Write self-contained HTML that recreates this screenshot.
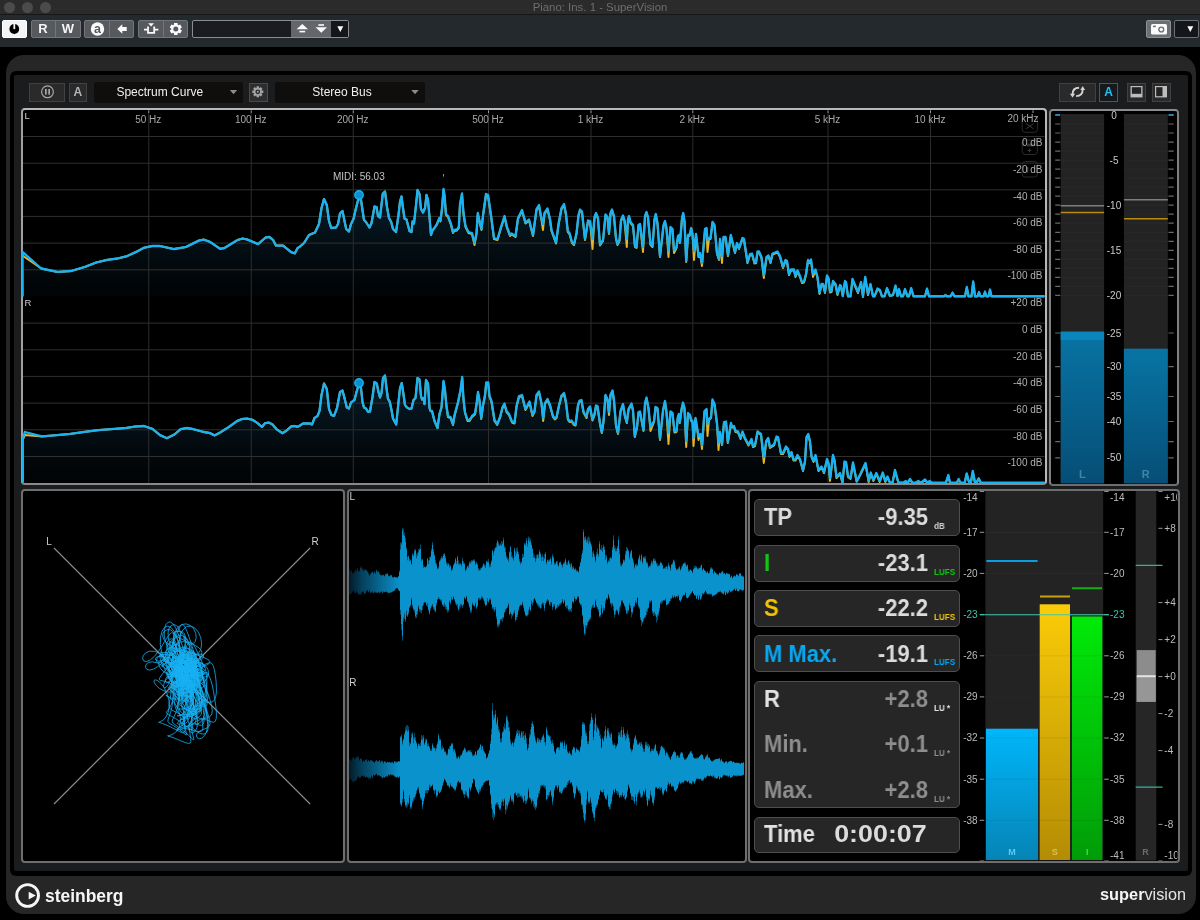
<!DOCTYPE html><html><head><meta charset="utf-8"><title>Piano: Ins. 1 - SuperVision</title><style>
*{box-sizing:border-box;margin:0;padding:0}
html,body{width:1200px;height:920px;overflow:hidden;background:#000}
body{position:relative;font-family:"Liberation Sans",Arial,sans-serif;color:#ddd}
.abs{position:absolute}
#titlebar{left:0;top:0;width:1200px;height:14px;background:#2b2b2b}
#title{left:0;top:0;width:1200px;height:14px;line-height:14px;text-align:center;font-size:11.4px;color:#6e6e6e}
.tl{width:11px;height:11px;border-radius:50%;background:#4b4b4b;top:1.5px}
#tbline{left:0;top:14px;width:1200px;height:1px;background:#15181a}
#toolbar{left:0;top:15px;width:1200px;height:32px;background:#24292e}
.tb{top:20px;height:18px;background:#565a5e;border:1px solid #72767a;border-radius:2px}
.tbt{top:20px;height:18px;color:#f4f4f4;font-weight:bold;font-size:13px;line-height:18px;text-align:center}
.tdv{top:21px;width:1px;height:16px;background:#72767a}
#frame{left:5.5px;top:55px;width:1190px;height:859px;background:#262626;border-radius:18px}
#inset{left:10px;top:70.5px;width:1181.5px;height:804.5px;background:#000;border-radius:6px}
#panel{left:13.5px;top:75px;width:1173.5px;height:796px;background:#1a1c1e;border-radius:2px}
.box{background:#000;border:2px solid #6e6e6e;border-radius:4px}
.pbtn{top:82.5px;height:18.5px;background:#2a2a2a;border:1px solid #414141}
.dd{top:81.5px;height:20.5px;background:#100d0d;border-radius:2px;color:#f0f0f0;font-size:12px;line-height:20.5px;text-align:center}
svg{position:absolute;left:0;top:0;overflow:visible;will-change:transform}
.abs{will-change:transform}
text{font-family:"Liberation Sans",Arial,sans-serif}
.row{left:753.7px;width:206px;background:#262626;border:1px solid #4e4e4e;border-radius:5px}
.lab{left:764px;font-size:23px;font-weight:bold;line-height:23px;color:#dcdcdc;white-space:nowrap;transform:scaleX(.955);transform-origin:0 0}
.val{left:840px;width:88px;text-align:right;font-size:23px;font-weight:bold;line-height:23px;color:#dcdcdc;white-space:nowrap;transform:scaleX(.955);transform-origin:100% 0}
.unit{left:934px;font-size:8.6px;font-weight:bold;line-height:8.6px;color:#d0d0d0;white-space:nowrap;transform:scaleX(.94);transform-origin:0 0}
.g{color:#8e8e8e}
</style></head><body>
<div id="titlebar" class="abs"></div>
<div class="abs tl" style="left:3.5px"></div>
<div class="abs tl" style="left:21.5px"></div>
<div class="abs tl" style="left:39.5px"></div>
<div id="title" class="abs">Piano: Ins. 1 - SuperVision</div>
<div id="tbline" class="abs"></div><div id="toolbar" class="abs"></div>
<div class="abs tb" style="left:2px;width:24.5px;background:#f4f4f4;border-color:#fff"></div>
<div class="abs tb" style="left:30.5px;width:49.5px"></div><div class="abs tdv" style="left:54.5px"></div>
<div class="abs tbt" style="left:31px;width:24px">R</div><div class="abs tbt" style="left:56px;width:24px">W</div>
<div class="abs tb" style="left:84px;width:50px"></div><div class="abs tdv" style="left:108.5px"></div>
<div class="abs tb" style="left:138px;width:50px"></div><div class="abs tdv" style="left:162.5px"></div>
<div class="abs tb" style="left:192px;width:157px;background:#1b1c1f;border-color:#8a8e91"></div>
<div class="abs" style="left:291px;top:21px;width:40px;height:16px;background:#63676b"></div>
<div class="abs" style="left:331px;top:21px;width:17px;height:16px;background:#14161a"></div>
<div class="abs tb" style="left:1146px;width:25px;background:#6c7073;border-color:#8e9194"></div>
<div class="abs tb" style="left:1174px;width:25px;background:#14161a;border-color:#6c7176"></div>
<svg width="1200" height="60" viewBox="0 0 1200 60"><circle cx="14.3" cy="29" r="4.9" fill="#000"/><rect x="13.4" y="23.5" width="1.8" height="5.6" fill="#f4f4f4"/><circle cx="97.5" cy="29" r="6.7" fill="#fafafa"/><text x="97.5" y="33.3" font-size="12.5" font-weight="bold" fill="#565a5e" text-anchor="middle">a</text><path d="M117.3 29 L122.3 24.3 L122.3 27 L126.7 27 L126.7 31 L122.3 31 L122.3 33.7 Z" fill="#fafafa"/><path d="M148.2 23.2 h5.8 l-2.9 3.2 z" fill="#fafafa"/><path d="M144 29.6 h3.2 M155 29.6 h3.4" stroke="#fafafa" stroke-width="1.8"/><path d="M148 26.6 v6.2 h6.2 v-6.2" fill="none" stroke="#fafafa" stroke-width="1.8"/><path d="M174 23 L177.6 23 L177.7 24.8 L178.5 25.3 L180.2 24.5 L181.9 27.5 L180.4 28.5 L180.4 29.5 L181.9 30.5 L180.2 33.5 L178.5 32.7 L177.7 33.2 L177.6 35 L174 35 L173.9 33.2 L173.1 32.7 L171.4 33.5 L169.7 30.5 L171.2 29.5 L171.2 28.5 L169.7 27.5 L171.4 24.5 L173.1 25.3 L173.9 24.8 Z" fill="#fafafa"/><circle cx="175.8" cy="29" r="2.5" fill="#565a5e"/><path d="M296.5 29.3 L302.3 24 L308 29.3 Z" fill="#fafafa"/><rect x="299.5" y="30.8" width="5.6" height="1.6" fill="#fafafa"/><path d="M315.5 27.3 L327 27.3 L321.3 32.8 Z" fill="#fafafa"/><rect x="318.4" y="24.2" width="5.6" height="1.6" fill="#fafafa"/><path d="M337.3 26.2 L343.3 26.2 L340.3 32 Z" fill="#fafafa"/><rect x="1151" y="24" width="16" height="10.6" rx="1.6" fill="#fafafa"/><circle cx="1161.3" cy="29.5" r="3.1" fill="#6c7073"/><circle cx="1161.3" cy="29.5" r="1.7" fill="#fafafa"/><rect x="1153" y="25.6" width="2.8" height="1.6" fill="#6c7073"/><path d="M1187.3 26.2 L1193.3 26.2 L1190.3 32 Z" fill="#fafafa"/></svg>
<div id="frame" class="abs"></div><div id="inset" class="abs"></div><div id="panel" class="abs"></div>
<div class="abs pbtn" style="left:29px;width:36px"></div>
<div class="abs pbtn" style="left:69.3px;width:17.5px;color:#b4b4b4;font-weight:bold;font-size:12px;line-height:17px;text-align:center">A</div>
<div class="abs dd" style="left:93.5px;width:148.5px;padding-right:17px">Spectrum Curve</div>
<div class="abs pbtn" style="left:248.5px;width:18.5px;background:#2e2e2e;border-color:#4a4a4a"></div>
<div class="abs dd" style="left:275px;width:150px;padding-right:16px">Stereo Bus</div>
<div class="abs pbtn" style="left:1059px;width:37px"></div>
<div class="abs pbtn" style="left:1099px;width:19px;background:#141a1e;border-color:#0a6f96;color:#1ac6f8;font-weight:bold;font-size:12px;line-height:17px;text-align:center">A</div>
<div class="abs pbtn" style="left:1127px;width:19px"></div>
<div class="abs pbtn" style="left:1151.5px;width:19px"></div>
<svg width="1200" height="120" viewBox="0 0 1200 120"><circle cx="47.5" cy="91.8" r="5.9" fill="none" stroke="#a8a8a8" stroke-width="1.2"/><rect x="45" y="89" width="1.7" height="5.6" fill="#a8a8a8"/><rect x="48.3" y="89" width="1.7" height="5.6" fill="#a8a8a8"/><path d="M229.8 90 L237.2 90 L233.5 94.2 Z" fill="#8c8c8c"/><path d="M411.3 90 L418.7 90 L415 94.2 Z" fill="#8c8c8c"/><path d="M256.6 86.3 L259 86.3 L259.1 87.9 L259.7 88.1 L260.8 87.1 L262.5 88.8 L261.5 89.9 L261.7 90.5 L263.3 90.6 L263.3 93 L261.7 93.1 L261.5 93.7 L262.5 94.8 L260.8 96.5 L259.7 95.5 L259.1 95.7 L259 97.3 L256.6 97.3 L256.5 95.7 L255.9 95.5 L254.8 96.5 L253.1 94.8 L254.1 93.7 L253.9 93.1 L252.3 93 L252.3 90.6 L253.9 90.5 L254.1 89.9 L253.1 88.8 L254.8 87.1 L255.9 88.1 L256.5 87.9 Z" fill="#a4a4a4"/><circle cx="257.8" cy="91.8" r="2.4" fill="#2e2e2e"/><circle cx="257.8" cy="91.8" r="1" fill="#a4a4a4"/><path d="M1079.1 87.7 Q1072.6 87.7 1072.6 94.2" fill="none" stroke="#d2d2d2" stroke-width="1.9"/><path d="M1076.1 96.1 Q1082.7 96.1 1082.7 89.6" fill="none" stroke="#d2d2d2" stroke-width="1.9"/><path d="M1069.9 93.8 L1075.2 93.8 L1072.5 97.4 Z" fill="#d2d2d2"/><path d="M1080.3 90 L1085.1 90 L1082.7 86 Z" fill="#d2d2d2"/><rect x="1130.5" y="86" width="12" height="11.4" fill="#bdbdbd"/><rect x="1131.8" y="87.2" width="9.4" height="6.6" fill="#242424"/><rect x="1155" y="86" width="12" height="11.4" fill="#bdbdbd"/><rect x="1156.2" y="87.2" width="6.3" height="9" fill="#242424"/></svg>
<div class="abs box" id="spec" style="left:21px;top:108.3px;width:1025.8px;height:377px;border-color:#b8b8b8 #b8b8b8 #8a8a8a #a0a0a0"></div>
<div class="abs box" id="meter" style="left:1049.3px;top:108.6px;width:130px;height:376.6px;border-color:#8c8c8c #808080 #6e6e6e #808080"></div>
<div class="abs box" id="vec" style="left:21px;top:489px;width:323.5px;height:374px"></div>
<div class="abs box" id="wave" style="left:346.5px;top:489px;width:399.5px;height:374px"></div>
<div class="abs box" id="loud" style="left:747.7px;top:489px;width:431.5px;height:374px"></div>
<svg width="1200" height="920" viewBox="0 0 1200 920"><defs><linearGradient id="gl" gradientUnits="userSpaceOnUse" x1="0" y1="195" x2="0" y2="297"><stop offset="0" stop-color="#0c3046" stop-opacity="0.6"/><stop offset="1" stop-color="#0a1e2c" stop-opacity="0.1"/></linearGradient><linearGradient id="gr" gradientUnits="userSpaceOnUse" x1="0" y1="380" x2="0" y2="483"><stop offset="0" stop-color="#0c3046" stop-opacity="0.6"/><stop offset="1" stop-color="#0a1e2c" stop-opacity="0.1"/></linearGradient></defs><path d="M22.5 251.9 L41.2 268.5 L57.5 271.9 L71.2 271 L85 266.9 L96.2 262.5 L107.5 259.8 L117.5 258.5 L126.9 256.2 L136.2 251.9 L143.8 247.8 L152.5 245.9 L160 246 L173.8 249.1 L186.2 246.9 L198.8 240.6 L203.8 239.6 L210 241.9 L220 248.8 L224.4 248.1 L237.5 240 L242.5 238.5 L247.5 239.6 L258.1 244.1 L265.6 237.5 L269.4 236.9 L273.1 240 L276 245.6 L283.1 245.6 L291.2 252.2 L294.8 253.4 L297.5 248.1 L300 246.5 L304 243 L309 235 L315 232.5 L319 224 L321.5 208 L324 199 L326.8 205 L329 221 L331.2 228 L336 227.5 L338 224 L340 213.5 L342.5 211 L344.5 221 L346.2 229 L349 231.5 L351 224 L353.5 219 L356 208 L358.5 198.5 L361 200 L364 220 L366 222 L369.5 227.5 L371.5 223 L374.5 206.5 L376.5 207 L378 216 L380 217.5 L382.8 193.5 L385 191.5 L387 207 L389 218 L391.2 222 L393 229 L396 232 L398.5 215 L400 201.5 L401.5 196.5 L403 208 L404.5 218.5 L406.5 219.5 L409.5 231 L411.5 232 L412.5 221.5 L414 223.5 L416 205 L417.5 190 L419.5 194 L421 209 L423 212.5 L425 208 L426.5 195 L428 200 L429.5 217 L431 235 L432.5 230.5 L436.5 225 L439.5 218 L440.5 220.5 L442 208 L443.5 189 L444.5 195 L446 214 L448 216 L451 224 L453 232 L454.5 230 L457 229.5 L458.8 227 L460 204 L462 193.5 L463.5 213 L465.5 226 L468.5 232 L472 233 L474.5 243 L476.5 233 L477.8 213 L480 223 L481.5 229 L483 215 L486 194 L488 195 L491 215 L494 238 L497.5 239 L501 227 L504.5 216 L507 227 L510 235 L511.5 233.5 L515.5 236 L518 218 L522 210 L525.5 222.5 L529 219.5 L533 235 L536.5 209 L539 205 L541.5 219 L543 224 L544.5 213 L547.5 208.5 L550 219 L551.5 230 L556 242.5 L558.5 224 L561.5 208 L564 204 L566 214 L567.8 231 L569.5 233 L572 242 L574 244 L576.5 233 L578.5 215 L580 209.5 L582 211.5 L585 239 L588 220.5 L590 221 L592.5 239 L594.5 217 L596 213 L598 218 L600 244.5 L603 240 L605.5 214.5 L607.5 217 L609 233 L610.5 213 L612 209.5 L614 216 L616 238 L617.5 244 L619.5 240 L621 220 L623 215.5 L624.5 220 L626.8 239 L628 219 L629 216 L630.5 222 L633 225 L635 246 L636.5 247 L638.5 225 L640 224 L643 247 L645 216 L646.5 212 L648 217 L650.5 244 L652.5 246 L654.5 219 L655.8 214 L657.5 223 L660 256 L663.5 225 L665 221 L666.5 228 L668.5 251 L670.5 227 L672.5 229 L674 250 L676.5 247 L678 236 L679 235 L680 242 L682 218 L683.2 213 L684.5 221 L686.2 261 L688 235 L689.5 235 L691.2 228 L692.5 234 L694 251 L696 234 L698.5 256 L700 253 L702 263 L705 229 L706.5 228 L707.5 240 L709 238 L710.5 238 L712.5 222 L714.5 225 L717 253 L719 259 L720 239 L722 256 L723.5 237 L725.5 237 L728 255 L730.8 235 L735 252 L737 243 L739 248 L742.5 238 L744 239 L747.5 262 L750 254 L752 253.5 L754.5 262.5 L756 262 L757.5 251.5 L759 251.5 L761.5 257 L763.8 275 L766.5 257 L768.5 255.5 L770.5 262 L772.5 253.5 L775 252.5 L777.5 251.5 L780 256 L783 267 L785.5 260 L787 261 L789 274 L791 269.5 L794 269.5 L795.5 276 L797.5 270.5 L800 276 L802 282 L804 281.5 L806 274 L808 260 L809.5 262 L811 259.5 L813 274 L815.5 269.5 L817.5 277 L819.5 293 L821.5 284 L823 284 L825 292 L827 275.5 L828.5 278 L830 291.5 L831.5 291 L833 281 L835.5 284 L837.5 294 L840 285 L841 286 L842.8 296 L845 281 L846 282 L848 296.3 L850.5 296.3 L852.5 279 L855 285 L858 292 L861 282 L863 296 L865.2 277 L868 294 L870.5 284 L873 296.3 L874.5 296.3 L877.5 288.5 L880 290 L882 296.3 L884.5 296.3 L887 288 L890 296 L893 295 L895.5 285.5 L897.5 296 L899 289 L901 296.3 L903 296.3 L905 289 L907.5 296.3 L909 296.3 L911.2 288 L913.5 296.3 L925 296.3 L927 288.5 L929 296.3 L944 296.3 L945.5 295 L946.5 296.3 L950.5 296.3 L952.5 292.5 L954.5 296.3 L965 296.3 L966.8 287 L968.5 296.3 L971.5 296.3 L973.2 281.5 L975 296.3 L977.5 296.3 L979 292 L980.5 296.3 L983.5 296.3 L985 291.5 L986.5 296.3 L988.5 296.3 L990 289.5 L991.5 296.3 L1044.5 296.3 L1044.5 296.4 L22.5 296.4 Z" fill="url(#gl)"/><path d="M22.8 439.5 L24.8 432 L41.9 436.4 L57.5 435.1 L70 433.9 L85 431.8 L98.8 430.1 L113.8 428.9 L126.2 427.9 L135 426.6 L143.8 426 L152.5 428.9 L160 435.1 L166.9 438.2 L174.4 434.5 L180.6 429.2 L186.9 428 L193.1 429.1 L203.8 432 L209.4 432.9 L214.6 435.4 L220 432.6 L228.8 427 L237.5 420.8 L242.5 418.9 L247.5 418.6 L252.5 419.8 L256.9 422.6 L261.9 427 L265 423.2 L268.8 422.6 L272.5 424.5 L276.9 429.5 L282.5 433.2 L286.2 430.8 L291.2 426.4 L294.4 426 L297.5 426.8 L300 425.5 L303 423.5 L310 423.5 L312 424.5 L314.5 418 L317.5 416 L319.5 411 L321.5 395 L324 383.5 L326.8 389 L329 409 L331.5 415 L334 416 L337 408 L340 392 L342.5 390.5 L344.5 398 L346.8 407.5 L349 408.5 L351 402.5 L354.5 400 L356.5 392 L358.5 385.5 L361 388 L362.5 402 L364 407.5 L366 408.5 L368 411.8 L370 411.5 L372.5 397 L374.5 382 L376.8 383.5 L378.5 392 L380 397.5 L381.5 393 L383 378 L385 375.5 L386.5 388 L388 399 L389.7 401.5 L391.5 410 L393 418.5 L396.2 424.5 L398.5 402 L400 388 L401.7 383 L403 391 L405 405 L407 407.5 L409.5 409 L411.5 408.5 L413.5 400 L415.5 398 L417.5 378 L419.5 379.5 L421 396 L422 399.5 L423.5 398 L424.5 404 L426 380 L428 383.5 L429.5 408 L430.5 411 L432 411 L434.5 421 L437.5 428 L439.5 414 L441.5 407 L443.5 381 L445 390 L446.5 406 L448 416 L450.5 417 L453 424 L454.5 415 L458 402 L460.5 390 L462.2 377 L463.5 399 L465 412 L467.5 420 L469.5 420 L472 416 L475 413.5 L476.5 404 L478 392 L479.5 400 L481.2 418 L483 405 L485 395 L486.2 382.5 L488.2 382.5 L489.5 396 L491.5 401 L494.5 420 L497.2 424 L500 417 L502.5 407 L504.5 403.5 L506.5 411 L509 414 L512 421.5 L514.5 422.5 L516.5 406 L519 396 L522 395 L525.5 409 L529.5 401.5 L532.5 415 L534.5 411 L536.5 395 L539 391.5 L541.5 403 L543.2 418 L545 403 L547.5 399 L550 405 L553 416 L554.8 418.5 L556.5 417 L559 405 L561.5 395.5 L564 393 L566 402 L568 419 L569.5 421 L571.5 420.5 L573.5 423.5 L575.5 424.5 L578 405 L579.5 400.5 L581.5 400 L583.5 411.5 L586.5 417 L588 409 L590 406.5 L592.5 419.5 L594.5 414 L596 405.5 L597.5 406 L600 423 L601.8 432 L603.5 421 L605.5 395 L607.5 399 L609 412 L610.5 394.5 L612.5 390.5 L614 400 L616 425 L618 433 L620.5 411 L623 404 L625 416 L626.8 422 L628.5 409 L630 406 L631.5 403.5 L633 410 L634.8 436 L637 427 L638.5 412 L640 411.5 L643.5 430 L645 403 L646.5 397.5 L648.5 408 L650.5 427 L654 421 L655.5 407 L657.5 408 L660 439 L663 410 L665 401 L666.5 412 L668.5 433 L670.5 411.5 L672.5 413 L674.5 431.5 L676.5 431 L677.8 417 L678.8 414 L679.8 422 L681.5 409 L683 402.5 L684.5 408 L686.2 441 L688 413 L690 415 L691.2 420 L692.5 421 L693.5 438 L695.5 418 L697 427 L698.5 436 L700.5 434 L702 445 L704.5 411 L706.5 409 L707.5 424 L709 419 L711 417 L712.5 399.5 L714.5 404 L717 423 L718.5 443 L720 432 L722 444 L724 422 L726 421.5 L727.8 442 L731 423 L732 426.5 L734 426 L735.5 431 L738 431.5 L740.5 438 L742.5 431.5 L744.5 437 L748.5 444.5 L751.5 439 L753 446 L755 445 L757.5 431.5 L761 434 L763.8 457 L766.2 441 L768.2 438 L770 447 L774 444.5 L776.5 436.5 L778 437 L781 453 L783 453 L786 446.5 L788 449 L789.5 456 L791.5 452 L793.5 459.5 L795.5 459.5 L797.5 455 L800 459 L803 470 L805 461 L806.5 437 L808.2 434 L810 441 L811.5 456 L813.5 461 L815.5 455 L818.5 470 L821.5 466.5 L824 472 L827 459 L828.5 463 L830 478 L833 455 L834.5 460 L836.5 477 L840 473 L842.5 482.5 L844.5 461.5 L846 462 L848 476 L850.5 478 L853 462.5 L856.7 481.5 L860.8 473 L865.5 463 L868.7 481 L870.8 472.5 L873.3 480 L876.3 473 L879.7 481 L882.8 472.5 L885.3 481 L887.5 476.5 L890 482.8 L892.5 482.8 L895 470 L898.3 482.5 L903.3 482.8 L905.8 481 L907.5 482.8 L910 479 L912.5 482.8 L915.8 482.8 L918.3 481 L920.8 482.8 L925 479.5 L927.5 482.8 L929.7 481 L931.7 482.8 L945.8 482.8 L948.3 475 L950 482.8 L956.7 482.8 L958.7 479 L960.3 482.8 L964.7 482.8 L966.7 473.3 L969.2 482.8 L970.8 482.8 L972.8 471 L975 482.8 L976.3 482.8 L978.7 478.3 L980.8 482.8 L1044.5 482.8 L1044.5 483 L22.7 483 Z" fill="url(#gr)"/><path d="M23 136.5 H1044.5" stroke="#2f2f2f" stroke-width="1"/><path d="M23 163.2 H1044.5" stroke="#2f2f2f" stroke-width="1"/><path d="M23 189.8 H1044.5" stroke="#2f2f2f" stroke-width="1"/><path d="M23 216.4 H1044.5" stroke="#2f2f2f" stroke-width="1"/><path d="M23 243.1 H1044.5" stroke="#2f2f2f" stroke-width="1"/><path d="M23 269.8 H1044.5" stroke="#2f2f2f" stroke-width="1"/><path d="M23 323.1 H1044.5" stroke="#2f2f2f" stroke-width="1"/><path d="M23 349.8 H1044.5" stroke="#2f2f2f" stroke-width="1"/><path d="M23 376.4 H1044.5" stroke="#2f2f2f" stroke-width="1"/><path d="M23 403.1 H1044.5" stroke="#2f2f2f" stroke-width="1"/><path d="M23 429.8 H1044.5" stroke="#2f2f2f" stroke-width="1"/><path d="M23 456.5 H1044.5" stroke="#2f2f2f" stroke-width="1"/><path d="M148.75 113 V483" stroke="#2c2c2c" stroke-width="1"/><path d="M148.75 110.3 V113" stroke="#9a9a9a" stroke-width="1"/><path d="M251.25 113 V483" stroke="#2c2c2c" stroke-width="1"/><path d="M251.25 110.3 V113" stroke="#9a9a9a" stroke-width="1"/><path d="M353.25 113 V483" stroke="#2c2c2c" stroke-width="1"/><path d="M353.25 110.3 V113" stroke="#9a9a9a" stroke-width="1"/><path d="M488.5 113 V483" stroke="#2c2c2c" stroke-width="1"/><path d="M488.5 110.3 V113" stroke="#9a9a9a" stroke-width="1"/><path d="M591 113 V483" stroke="#2c2c2c" stroke-width="1"/><path d="M591 110.3 V113" stroke="#9a9a9a" stroke-width="1"/><path d="M692.8 113 V483" stroke="#2c2c2c" stroke-width="1"/><path d="M692.8 110.3 V113" stroke="#9a9a9a" stroke-width="1"/><path d="M828 113 V483" stroke="#2c2c2c" stroke-width="1"/><path d="M828 110.3 V113" stroke="#9a9a9a" stroke-width="1"/><path d="M930.5 113 V483" stroke="#2c2c2c" stroke-width="1"/><path d="M930.5 110.3 V113" stroke="#9a9a9a" stroke-width="1"/><path d="M1033 110.3 V113" stroke="#9a9a9a" stroke-width="1"/><g fill="none" stroke="#2b2b2b" stroke-width="1"><rect x="1022.2" y="116.5" width="15.2" height="15.8" rx="3"/><rect x="1022.2" y="140" width="15.2" height="14.5" rx="3"/><rect x="1022.2" y="161.5" width="15.2" height="15.5" rx="3"/><path d="M1026 123.5 L1033.5 128.8 M1033.5 123.5 L1026 128.8" stroke="#3c3c3c"/><path d="M1027.8 150.5 h3.6 M1029.6 148.7 v3.6" stroke="#3c3c3c"/></g><rect x="1027" y="143.5" width="6.5" height="3" fill="#333"/><rect x="1026.5" y="167" width="1.8" height="5.7" fill="#444"/><text x="148.25" y="122.5" font-size="10" fill="#a8a8a8" text-anchor="middle">50 Hz</text><text x="250.75" y="122.5" font-size="10" fill="#a8a8a8" text-anchor="middle">100 Hz</text><text x="352.75" y="122.5" font-size="10" fill="#a8a8a8" text-anchor="middle">200 Hz</text><text x="488.0" y="122.5" font-size="10" fill="#a8a8a8" text-anchor="middle">500 Hz</text><text x="590.5" y="122.5" font-size="10" fill="#a8a8a8" text-anchor="middle">1 kHz</text><text x="692.3" y="122.5" font-size="10" fill="#a8a8a8" text-anchor="middle">2 kHz</text><text x="827.5" y="122.5" font-size="10" fill="#a8a8a8" text-anchor="middle">5 kHz</text><text x="930.0" y="122.5" font-size="10" fill="#a8a8a8" text-anchor="middle">10 kHz</text><text x="1038.5" y="122.1" font-size="10" fill="#a8a8a8" text-anchor="end">20 kHz</text><text x="1042.5" y="146.2" font-size="10" fill="#b0b0b0" text-anchor="end">0 dB</text><text x="1042.5" y="172.8" font-size="10" fill="#b0b0b0" text-anchor="end">-20 dB</text><text x="1042.5" y="199.5" font-size="10" fill="#b0b0b0" text-anchor="end">-40 dB</text><text x="1042.5" y="226.1" font-size="10" fill="#b0b0b0" text-anchor="end">-60 dB</text><text x="1042.5" y="252.8" font-size="10" fill="#b0b0b0" text-anchor="end">-80 dB</text><text x="1042.5" y="279.4" font-size="10" fill="#b0b0b0" text-anchor="end">-100 dB</text><text x="1042.5" y="306.1" font-size="10" fill="#b0b0b0" text-anchor="end">+20 dB</text><text x="1042.5" y="332.8" font-size="10" fill="#b0b0b0" text-anchor="end">0 dB</text><text x="1042.5" y="359.5" font-size="10" fill="#b0b0b0" text-anchor="end">-20 dB</text><text x="1042.5" y="386.1" font-size="10" fill="#b0b0b0" text-anchor="end">-40 dB</text><text x="1042.5" y="412.8" font-size="10" fill="#b0b0b0" text-anchor="end">-60 dB</text><text x="1042.5" y="439.5" font-size="10" fill="#b0b0b0" text-anchor="end">-80 dB</text><text x="1042.5" y="466.2" font-size="10" fill="#b0b0b0" text-anchor="end">-100 dB</text><text x="24.5" y="119.2" font-size="9.5" fill="#d0d0d0">L</text><text x="24.5" y="306.3" font-size="9.5" fill="#d0d0d0">R</text><text x="333" y="179.6" font-size="10" fill="#c4c4c4">MIDI: 56.03</text><path d="M22.5 255.5 L41.2 268.5 L57.5 271.9 L71.2 271 L85 266.9 L96.2 262.5 L107.5 259.8 L117.5 258.5 L126.9 256.2 L136.2 251.9 L143.8 247.8 L152.5 245.9 L160 246 L173.8 249.1 L186.2 246.9 L198.8 240.6 L203.8 239.6 L210 241.9 L220 248.8 L224.4 248.1 L237.5 240 L242.5 238.5 L247.5 239.6 L258.1 244.1 L265.6 237.5 L269.4 236.9 L273.1 240 L276 245.6 L283.1 245.6 L291.2 252.2 L294.8 253.4 L297.5 248.1 L300 246.5 L304 243 L309 235 L315 232.5 L319 224 L321.5 208 L324 199 L326.8 205 L329 221 L331.2 228 L336 227.5 L338 224 L340 213.5 L342.5 211 L344.5 221 L346.2 229 L349 231.5 L351 224 L353.5 219 L356 208 L358.5 198.5 L361 200 L364 220 L366 222 L369.5 227.5 L371.5 223 L374.5 206.5 L376.5 207 L378 216 L380 217.5 L382.8 193.5 L385 191.5 L387 207 L389 218 L391.2 222 L393 229 L396 232 L398.5 215 L400 201.5 L401.5 196.5 L403 208 L404.5 218.5 L406.5 219.5 L409.5 231 L411.5 232 L412.5 221.5 L414 223.5 L416 205 L417.5 190 L419.5 194 L421 209 L423 212.5 L425 208 L426.5 195 L428 200 L429.5 217 L431 235 L432.5 230.5 L436.5 225 L439.5 218 L440.5 221.5 L442 209 L443.5 190 L444.5 196 L446 215 L448 217 L451 225 L453 233 L454.5 231 L457 230.5 L458.8 228 L460 205 L462 194.5 L463.5 214 L465.5 227 L468.5 233 L472 234 L474.5 245 L476.5 234 L477.8 214 L480 224 L481.5 230 L483 216 L486 195 L488 196 L491 216 L494 239 L497.5 240 L501 228 L504.5 217 L507 228 L510 236 L511.5 234.5 L515.5 237 L518 219 L522 211 L525.5 223.5 L529 220.5 L533 236 L536.5 210 L539 206 L541.5 220 L543 230 L544.5 214 L547.5 209.5 L550 220 L551.5 231 L556 243.5 L558.5 225 L561.5 209 L564 205 L566 215 L567.8 232 L569.5 234 L572 243 L574 245 L576.5 234 L578.5 216 L580 210.5 L582 212.5 L585 240 L588 221.5 L590 222 L592.5 249 L594.5 218 L596 214 L598 219 L600 245.5 L603 241 L605.5 215.5 L607.5 218 L609 234 L610.5 214 L612 210.5 L614 217 L616 239 L617.5 245 L619.5 241 L621 221 L623 216.5 L624.5 221 L626.8 247 L628 220 L629 217 L630.5 223 L633 226 L635 247 L636.5 248 L638.5 226 L640 225 L643 252 L645 217 L646.5 213 L648 218 L650.5 245 L652.5 247 L654.5 220 L655.8 215 L657.5 224 L660 257 L663.5 226 L665 222 L666.5 229 L668.5 257 L670.5 228 L672.5 230 L674 253 L676.5 248 L678 237 L679 236 L680 243 L682 219 L683.2 214 L684.5 222 L686.2 262 L688 236 L689.5 236 L691.2 229 L692.5 235 L694 260 L696 235 L698.5 257 L700 254 L702 266 L705 230 L706.5 229 L707.5 252 L709 239 L710.5 239 L712.5 223 L714.5 226 L717 254 L719 260 L720 240 L722 263 L723.5 238 L725.5 238 L728 256 L730.8 236 L735 253 L737 244 L739 249 L742.5 239 L744 240 L747.5 263 L750 255 L752 254.5 L754.5 263.5 L756 263 L757.5 252.5 L759 252.5 L761.5 258 L763.8 278 L766.5 258 L768.5 256.5 L770.5 263 L772.5 254.5 L775 253.5 L777.5 252.5 L780 257 L783 268 L785.5 261 L787 262 L789 275 L791 270.5 L794 270.5 L795.5 277 L797.5 271.5 L800 277 L802 283 L804 282.5 L806 275 L808 261 L809.5 263 L811 260.5 L813 277 L815.5 270.5 L817.5 278 L819.5 294 L821.5 285 L823 285 L825 293 L827 276.5 L828.5 279 L830 292.5 L831.5 292 L833 282 L835.5 285 L837.5 295 L840 286 L841 287 L842.8 296 L845 282 L846 283 L848 296.3 L850.5 296.3 L852.5 280 L855 286 L858 293 L861 283 L863 297 L865.2 278 L868 295 L870.5 285 L873 296.3 L874.5 296.3 L877.5 289.5 L880 291 L882 296.3 L884.5 296.3 L887 289 L890 296 L893 295 L895.5 286.5 L897.5 296 L899 290 L901 296.3 L903 296.3 L905 290 L907.5 296.3 L909 296.3 L911.2 289 L913.5 296.3 L925 296.3 L927 289.5 L929 296.3 L944 296.3 L945.5 295 L946.5 296.3 L950.5 296.3 L952.5 293.5 L954.5 296.3 L965 296.3 L966.8 288 L968.5 296.3 L971.5 296.3 L973.2 282.5 L975 296.3 L977.5 296.3 L979 293 L980.5 296.3 L983.5 296.3 L985 292.5 L986.5 296.3 L988.5 296.3 L990 290.5 L991.5 296.3 L1044.5 296.3" fill="none" stroke="#eab420" stroke-width="2" stroke-linejoin="round"/><path d="M22.8 439.5 L25 435 L41.9 436.4 L57.5 435.1 L70 433.9 L85 431.8 L98.8 430.1 L113.8 428.9 L126.2 427.9 L135 426.6 L143.8 426 L152.5 428.9 L160 435.1 L166.9 438.2 L174.4 434.5 L180.6 429.2 L186.9 428 L193.1 429.1 L203.8 432 L209.4 432.9 L214.6 435.4 L220 432.6 L228.8 427 L237.5 420.8 L242.5 418.9 L247.5 418.6 L252.5 419.8 L256.9 422.6 L261.9 427 L265 423.2 L268.8 422.6 L272.5 424.5 L276.9 429.5 L282.5 433.2 L286.2 430.8 L291.2 426.4 L294.4 426 L297.5 426.8 L300 425.5 L303 423.5 L310 423.5 L312 424.5 L314.5 418 L317.5 416 L319.5 411 L321.5 395 L324 383.5 L326.8 389 L329 409 L331.5 415 L334 416 L337 408 L340 392 L342.5 390.5 L344.5 398 L346.8 407.5 L349 408.5 L351 402.5 L354.5 400 L356.5 392 L358.5 385.5 L361 388 L362.5 402 L364 407.5 L366 408.5 L368 411.8 L370 411.5 L372.5 397 L374.5 382 L376.8 383.5 L378.5 392 L380 397.5 L381.5 393 L383 378 L385 375.5 L386.5 388 L388 399 L389.7 401.5 L391.5 410 L393 418.5 L396.2 424.5 L398.5 402 L400 388 L401.7 383 L403 391 L405 405 L407 407.5 L409.5 409 L411.5 408.5 L413.5 400 L415.5 398 L417.5 378 L419.5 379.5 L421 396 L422 399.5 L423.5 398 L424.5 404 L426 380 L428 383.5 L429.5 408 L430.5 411 L432 411 L434.5 421 L437.5 428 L439.5 414 L441.5 408 L443.5 382 L445 391 L446.5 407 L448 417 L450.5 418 L453 425 L454.5 416 L458 403 L460.5 391 L462.2 378 L463.5 400 L465 413 L467.5 421 L469.5 421 L472 417 L475 414.5 L476.5 405 L478 393 L479.5 401 L481.2 419 L483 406 L485 396 L486.2 383.5 L488.2 383.5 L489.5 397 L491.5 402 L494.5 421 L497.2 425 L500 418 L502.5 408 L504.5 404.5 L506.5 412 L509 415 L512 422.5 L514.5 423.5 L516.5 407 L519 397 L522 396 L525.5 410 L529.5 402.5 L532.5 416 L534.5 412 L536.5 396 L539 392.5 L541.5 404 L543.2 421 L545 404 L547.5 400 L550 406 L553 417 L554.8 419.5 L556.5 418 L559 406 L561.5 396.5 L564 394 L566 403 L568 420 L569.5 422 L571.5 421.5 L573.5 424.5 L575.5 425.5 L578 406 L579.5 401.5 L581.5 401 L583.5 412.5 L586.5 418 L588 410 L590 407.5 L592.5 420.5 L594.5 415 L596 406.5 L597.5 407 L600 424 L601.8 433 L603.5 422 L605.5 396 L607.5 400 L609 415 L610.5 395.5 L612.5 391.5 L614 401 L616 426 L618 434 L620.5 412 L623 405 L625 417 L626.8 423 L628.5 410 L630 407 L631.5 404.5 L633 411 L634.8 437 L637 428 L638.5 413 L640 412.5 L643.5 431 L645 404 L646.5 398.5 L648.5 409 L650.5 431 L654 422 L655.5 408 L657.5 409 L660 440 L663 411 L665 402 L666.5 413 L668.5 444 L670.5 412.5 L672.5 414 L674.5 432.5 L676.5 432 L677.8 418 L678.8 415 L679.8 423 L681.5 410 L683 403.5 L684.5 409 L686.2 447 L688 414 L690 416 L691.2 421 L692.5 422 L693.5 446 L695.5 419 L697 428 L698.5 440 L700.5 435 L702 449 L704.5 412 L706.5 410 L707.5 436 L709 420 L711 418 L712.5 400.5 L714.5 405 L717 424 L718.5 450 L720 433 L722 445 L724 423 L726 422.5 L727.8 443 L731 424 L732 427.5 L734 427 L735.5 432 L738 432.5 L740.5 439 L742.5 432.5 L744.5 438 L748.5 445.5 L751.5 440 L753 447 L755 446 L757.5 432.5 L761 435 L763.8 463 L766.2 442 L768.2 439 L770 448 L774 445.5 L776.5 437.5 L778 438 L781 454 L783 454 L786 447.5 L788 450 L789.5 457 L791.5 453 L793.5 460.5 L795.5 460.5 L797.5 456 L800 460 L803 471 L805 462 L806.5 438 L808.2 435 L810 442 L811.5 457 L813.5 462 L815.5 456 L818.5 471 L821.5 467.5 L824 473 L827 460 L828.5 464 L830 481 L833 456 L834.5 461 L836.5 478 L840 474 L842.5 482.5 L844.5 462.5 L846 463 L848 477 L850.5 479 L853 463.5 L856.7 481.5 L860.8 474 L865.5 464 L868.7 482 L870.8 473.5 L873.3 481 L876.3 474 L879.7 482 L882.8 473.5 L885.3 482 L887.5 477.5 L890 482.8 L892.5 482.8 L895 471 L898.3 482.5 L903.3 482.8 L905.8 482 L907.5 482.8 L910 480 L912.5 482.8 L915.8 482.8 L918.3 482 L920.8 482.8 L925 480.5 L927.5 482.8 L929.7 482 L931.7 482.8 L945.8 482.8 L948.3 476 L950 482.8 L956.7 482.8 L958.7 480 L960.3 482.8 L964.7 482.8 L966.7 474.3 L969.2 482.8 L970.8 482.8 L972.8 472 L975 482.8 L976.3 482.8 L978.7 479.3 L980.8 482.8 L1044.5 482.8" fill="none" stroke="#eab420" stroke-width="2" stroke-linejoin="round"/><path d="M22.7 296.4 L22.5 251.9 L41.2 268.5 L57.5 271.9 L71.2 271 L85 266.9 L96.2 262.5 L107.5 259.8 L117.5 258.5 L126.9 256.2 L136.2 251.9 L143.8 247.8 L152.5 245.9 L160 246 L173.8 249.1 L186.2 246.9 L198.8 240.6 L203.8 239.6 L210 241.9 L220 248.8 L224.4 248.1 L237.5 240 L242.5 238.5 L247.5 239.6 L258.1 244.1 L265.6 237.5 L269.4 236.9 L273.1 240 L276 245.6 L283.1 245.6 L291.2 252.2 L294.8 253.4 L297.5 248.1 L300 246.5 L304 243 L309 235 L315 232.5 L319 224 L321.5 208 L324 199 L326.8 205 L329 221 L331.2 228 L336 227.5 L338 224 L340 213.5 L342.5 211 L344.5 221 L346.2 229 L349 231.5 L351 224 L353.5 219 L356 208 L358.5 198.5 L361 200 L364 220 L366 222 L369.5 227.5 L371.5 223 L374.5 206.5 L376.5 207 L378 216 L380 217.5 L382.8 193.5 L385 191.5 L387 207 L389 218 L391.2 222 L393 229 L396 232 L398.5 215 L400 201.5 L401.5 196.5 L403 208 L404.5 218.5 L406.5 219.5 L409.5 231 L411.5 232 L412.5 221.5 L414 223.5 L416 205 L417.5 190 L419.5 194 L421 209 L423 212.5 L425 208 L426.5 195 L428 200 L429.5 217 L431 235 L432.5 230.5 L436.5 225 L439.5 218 L440.5 220.5 L442 208 L443.5 189 L444.5 195 L446 214 L448 216 L451 224 L453 232 L454.5 230 L457 229.5 L458.8 227 L460 204 L462 193.5 L463.5 213 L465.5 226 L468.5 232 L472 233 L474.5 243 L476.5 233 L477.8 213 L480 223 L481.5 229 L483 215 L486 194 L488 195 L491 215 L494 238 L497.5 239 L501 227 L504.5 216 L507 227 L510 235 L511.5 233.5 L515.5 236 L518 218 L522 210 L525.5 222.5 L529 219.5 L533 235 L536.5 209 L539 205 L541.5 219 L543 224 L544.5 213 L547.5 208.5 L550 219 L551.5 230 L556 242.5 L558.5 224 L561.5 208 L564 204 L566 214 L567.8 231 L569.5 233 L572 242 L574 244 L576.5 233 L578.5 215 L580 209.5 L582 211.5 L585 239 L588 220.5 L590 221 L592.5 239 L594.5 217 L596 213 L598 218 L600 244.5 L603 240 L605.5 214.5 L607.5 217 L609 233 L610.5 213 L612 209.5 L614 216 L616 238 L617.5 244 L619.5 240 L621 220 L623 215.5 L624.5 220 L626.8 239 L628 219 L629 216 L630.5 222 L633 225 L635 246 L636.5 247 L638.5 225 L640 224 L643 247 L645 216 L646.5 212 L648 217 L650.5 244 L652.5 246 L654.5 219 L655.8 214 L657.5 223 L660 256 L663.5 225 L665 221 L666.5 228 L668.5 251 L670.5 227 L672.5 229 L674 250 L676.5 247 L678 236 L679 235 L680 242 L682 218 L683.2 213 L684.5 221 L686.2 261 L688 235 L689.5 235 L691.2 228 L692.5 234 L694 251 L696 234 L698.5 256 L700 253 L702 263 L705 229 L706.5 228 L707.5 240 L709 238 L710.5 238 L712.5 222 L714.5 225 L717 253 L719 259 L720 239 L722 256 L723.5 237 L725.5 237 L728 255 L730.8 235 L735 252 L737 243 L739 248 L742.5 238 L744 239 L747.5 262 L750 254 L752 253.5 L754.5 262.5 L756 262 L757.5 251.5 L759 251.5 L761.5 257 L763.8 275 L766.5 257 L768.5 255.5 L770.5 262 L772.5 253.5 L775 252.5 L777.5 251.5 L780 256 L783 267 L785.5 260 L787 261 L789 274 L791 269.5 L794 269.5 L795.5 276 L797.5 270.5 L800 276 L802 282 L804 281.5 L806 274 L808 260 L809.5 262 L811 259.5 L813 274 L815.5 269.5 L817.5 277 L819.5 293 L821.5 284 L823 284 L825 292 L827 275.5 L828.5 278 L830 291.5 L831.5 291 L833 281 L835.5 284 L837.5 294 L840 285 L841 286 L842.8 296 L845 281 L846 282 L848 296.3 L850.5 296.3 L852.5 279 L855 285 L858 292 L861 282 L863 296 L865.2 277 L868 294 L870.5 284 L873 296.3 L874.5 296.3 L877.5 288.5 L880 290 L882 296.3 L884.5 296.3 L887 288 L890 296 L893 295 L895.5 285.5 L897.5 296 L899 289 L901 296.3 L903 296.3 L905 289 L907.5 296.3 L909 296.3 L911.2 288 L913.5 296.3 L925 296.3 L927 288.5 L929 296.3 L944 296.3 L945.5 295 L946.5 296.3 L950.5 296.3 L952.5 292.5 L954.5 296.3 L965 296.3 L966.8 287 L968.5 296.3 L971.5 296.3 L973.2 281.5 L975 296.3 L977.5 296.3 L979 292 L980.5 296.3 L983.5 296.3 L985 291.5 L986.5 296.3 L988.5 296.3 L990 289.5 L991.5 296.3 L1044.5 296.3" fill="none" stroke="#19b2f2" stroke-width="2.3" stroke-linejoin="round"/><path d="M22.9 482.5 L22.8 439.5 L24.8 432 L41.9 436.4 L57.5 435.1 L70 433.9 L85 431.8 L98.8 430.1 L113.8 428.9 L126.2 427.9 L135 426.6 L143.8 426 L152.5 428.9 L160 435.1 L166.9 438.2 L174.4 434.5 L180.6 429.2 L186.9 428 L193.1 429.1 L203.8 432 L209.4 432.9 L214.6 435.4 L220 432.6 L228.8 427 L237.5 420.8 L242.5 418.9 L247.5 418.6 L252.5 419.8 L256.9 422.6 L261.9 427 L265 423.2 L268.8 422.6 L272.5 424.5 L276.9 429.5 L282.5 433.2 L286.2 430.8 L291.2 426.4 L294.4 426 L297.5 426.8 L300 425.5 L303 423.5 L310 423.5 L312 424.5 L314.5 418 L317.5 416 L319.5 411 L321.5 395 L324 383.5 L326.8 389 L329 409 L331.5 415 L334 416 L337 408 L340 392 L342.5 390.5 L344.5 398 L346.8 407.5 L349 408.5 L351 402.5 L354.5 400 L356.5 392 L358.5 385.5 L361 388 L362.5 402 L364 407.5 L366 408.5 L368 411.8 L370 411.5 L372.5 397 L374.5 382 L376.8 383.5 L378.5 392 L380 397.5 L381.5 393 L383 378 L385 375.5 L386.5 388 L388 399 L389.7 401.5 L391.5 410 L393 418.5 L396.2 424.5 L398.5 402 L400 388 L401.7 383 L403 391 L405 405 L407 407.5 L409.5 409 L411.5 408.5 L413.5 400 L415.5 398 L417.5 378 L419.5 379.5 L421 396 L422 399.5 L423.5 398 L424.5 404 L426 380 L428 383.5 L429.5 408 L430.5 411 L432 411 L434.5 421 L437.5 428 L439.5 414 L441.5 407 L443.5 381 L445 390 L446.5 406 L448 416 L450.5 417 L453 424 L454.5 415 L458 402 L460.5 390 L462.2 377 L463.5 399 L465 412 L467.5 420 L469.5 420 L472 416 L475 413.5 L476.5 404 L478 392 L479.5 400 L481.2 418 L483 405 L485 395 L486.2 382.5 L488.2 382.5 L489.5 396 L491.5 401 L494.5 420 L497.2 424 L500 417 L502.5 407 L504.5 403.5 L506.5 411 L509 414 L512 421.5 L514.5 422.5 L516.5 406 L519 396 L522 395 L525.5 409 L529.5 401.5 L532.5 415 L534.5 411 L536.5 395 L539 391.5 L541.5 403 L543.2 418 L545 403 L547.5 399 L550 405 L553 416 L554.8 418.5 L556.5 417 L559 405 L561.5 395.5 L564 393 L566 402 L568 419 L569.5 421 L571.5 420.5 L573.5 423.5 L575.5 424.5 L578 405 L579.5 400.5 L581.5 400 L583.5 411.5 L586.5 417 L588 409 L590 406.5 L592.5 419.5 L594.5 414 L596 405.5 L597.5 406 L600 423 L601.8 432 L603.5 421 L605.5 395 L607.5 399 L609 412 L610.5 394.5 L612.5 390.5 L614 400 L616 425 L618 433 L620.5 411 L623 404 L625 416 L626.8 422 L628.5 409 L630 406 L631.5 403.5 L633 410 L634.8 436 L637 427 L638.5 412 L640 411.5 L643.5 430 L645 403 L646.5 397.5 L648.5 408 L650.5 427 L654 421 L655.5 407 L657.5 408 L660 439 L663 410 L665 401 L666.5 412 L668.5 433 L670.5 411.5 L672.5 413 L674.5 431.5 L676.5 431 L677.8 417 L678.8 414 L679.8 422 L681.5 409 L683 402.5 L684.5 408 L686.2 441 L688 413 L690 415 L691.2 420 L692.5 421 L693.5 438 L695.5 418 L697 427 L698.5 436 L700.5 434 L702 445 L704.5 411 L706.5 409 L707.5 424 L709 419 L711 417 L712.5 399.5 L714.5 404 L717 423 L718.5 443 L720 432 L722 444 L724 422 L726 421.5 L727.8 442 L731 423 L732 426.5 L734 426 L735.5 431 L738 431.5 L740.5 438 L742.5 431.5 L744.5 437 L748.5 444.5 L751.5 439 L753 446 L755 445 L757.5 431.5 L761 434 L763.8 457 L766.2 441 L768.2 438 L770 447 L774 444.5 L776.5 436.5 L778 437 L781 453 L783 453 L786 446.5 L788 449 L789.5 456 L791.5 452 L793.5 459.5 L795.5 459.5 L797.5 455 L800 459 L803 470 L805 461 L806.5 437 L808.2 434 L810 441 L811.5 456 L813.5 461 L815.5 455 L818.5 470 L821.5 466.5 L824 472 L827 459 L828.5 463 L830 478 L833 455 L834.5 460 L836.5 477 L840 473 L842.5 482.5 L844.5 461.5 L846 462 L848 476 L850.5 478 L853 462.5 L856.7 481.5 L860.8 473 L865.5 463 L868.7 481 L870.8 472.5 L873.3 480 L876.3 473 L879.7 481 L882.8 472.5 L885.3 481 L887.5 476.5 L890 482.8 L892.5 482.8 L895 470 L898.3 482.5 L903.3 482.8 L905.8 481 L907.5 482.8 L910 479 L912.5 482.8 L915.8 482.8 L918.3 481 L920.8 482.8 L925 479.5 L927.5 482.8 L929.7 481 L931.7 482.8 L945.8 482.8 L948.3 475 L950 482.8 L956.7 482.8 L958.7 479 L960.3 482.8 L964.7 482.8 L966.7 473.3 L969.2 482.8 L970.8 482.8 L972.8 471 L975 482.8 L976.3 482.8 L978.7 478.3 L980.8 482.8 L1044.5 482.8" fill="none" stroke="#19b2f2" stroke-width="2.3" stroke-linejoin="round"/><circle cx="359" cy="195" r="4.2" fill="#0b8fd0" stroke="#19b2f2" stroke-width="1.4"/><circle cx="359" cy="383" r="4.2" fill="#0b8fd0" stroke="#19b2f2" stroke-width="1.4"/><path d="M443.5 174 v2.5" stroke="#19b2f2" stroke-width="1"/></svg>
<svg width="1200" height="920" viewBox="0 0 1200 920"><defs><linearGradient id="mb" x1="0" y1="0" x2="0" y2="1"><stop offset="0" stop-color="#0874a4"/><stop offset="1" stop-color="#064e76"/></linearGradient></defs><rect x="1060.7" y="114.3" width="43.4" height="369" fill="#232323"/><rect x="1123.9" y="114.3" width="43.9" height="369" fill="#232323"/><path d="M1055.2 115 H1060.2 M1168.5 115 H1173.7" stroke="#2a82b4" stroke-width="2"/><path d="M1060.7 115 H1104.1 M1123.9 115 H1167.8" stroke="#292929" stroke-width="1"/><path d="M1055.2 124 H1060.2 M1168.5 124 H1173.7" stroke="#6a6a6a" stroke-width="1.2"/><path d="M1060.7 124 H1104.1 M1123.9 124 H1167.8" stroke="#292929" stroke-width="1"/><path d="M1055.2 133 H1060.2 M1168.5 133 H1173.7" stroke="#6a6a6a" stroke-width="1.2"/><path d="M1060.7 133 H1104.1 M1123.9 133 H1167.8" stroke="#292929" stroke-width="1"/><path d="M1055.2 142.1 H1060.2 M1168.5 142.1 H1173.7" stroke="#6a6a6a" stroke-width="1.2"/><path d="M1060.7 142.1 H1104.1 M1123.9 142.1 H1167.8" stroke="#292929" stroke-width="1"/><path d="M1055.2 151.1 H1060.2 M1168.5 151.1 H1173.7" stroke="#6a6a6a" stroke-width="1.2"/><path d="M1060.7 151.1 H1104.1 M1123.9 151.1 H1167.8" stroke="#292929" stroke-width="1"/><path d="M1055.2 160.1 H1060.2 M1168.5 160.1 H1173.7" stroke="#6a6a6a" stroke-width="1.2"/><path d="M1060.7 160.1 H1104.1 M1123.9 160.1 H1167.8" stroke="#292929" stroke-width="1"/><path d="M1055.2 169.1 H1060.2 M1168.5 169.1 H1173.7" stroke="#6a6a6a" stroke-width="1.2"/><path d="M1060.7 169.1 H1104.1 M1123.9 169.1 H1167.8" stroke="#292929" stroke-width="1"/><path d="M1055.2 178.1 H1060.2 M1168.5 178.1 H1173.7" stroke="#6a6a6a" stroke-width="1.2"/><path d="M1060.7 178.1 H1104.1 M1123.9 178.1 H1167.8" stroke="#292929" stroke-width="1"/><path d="M1055.2 187.2 H1060.2 M1168.5 187.2 H1173.7" stroke="#6a6a6a" stroke-width="1.2"/><path d="M1060.7 187.2 H1104.1 M1123.9 187.2 H1167.8" stroke="#292929" stroke-width="1"/><path d="M1055.2 196.2 H1060.2 M1168.5 196.2 H1173.7" stroke="#6a6a6a" stroke-width="1.2"/><path d="M1060.7 196.2 H1104.1 M1123.9 196.2 H1167.8" stroke="#292929" stroke-width="1"/><path d="M1055.2 205.2 H1060.2 M1168.5 205.2 H1173.7" stroke="#6a6a6a" stroke-width="1.2"/><path d="M1060.7 205.2 H1104.1 M1123.9 205.2 H1167.8" stroke="#292929" stroke-width="1"/><path d="M1055.2 214.2 H1060.2 M1168.5 214.2 H1173.7" stroke="#6a6a6a" stroke-width="1.2"/><path d="M1060.7 214.2 H1104.1 M1123.9 214.2 H1167.8" stroke="#292929" stroke-width="1"/><path d="M1055.2 223.2 H1060.2 M1168.5 223.2 H1173.7" stroke="#6a6a6a" stroke-width="1.2"/><path d="M1060.7 223.2 H1104.1 M1123.9 223.2 H1167.8" stroke="#292929" stroke-width="1"/><path d="M1055.2 232.3 H1060.2 M1168.5 232.3 H1173.7" stroke="#6a6a6a" stroke-width="1.2"/><path d="M1060.7 232.3 H1104.1 M1123.9 232.3 H1167.8" stroke="#292929" stroke-width="1"/><path d="M1055.2 241.3 H1060.2 M1168.5 241.3 H1173.7" stroke="#6a6a6a" stroke-width="1.2"/><path d="M1060.7 241.3 H1104.1 M1123.9 241.3 H1167.8" stroke="#292929" stroke-width="1"/><path d="M1055.2 250.3 H1060.2 M1168.5 250.3 H1173.7" stroke="#6a6a6a" stroke-width="1.2"/><path d="M1060.7 250.3 H1104.1 M1123.9 250.3 H1167.8" stroke="#292929" stroke-width="1"/><path d="M1055.2 259.3 H1060.2 M1168.5 259.3 H1173.7" stroke="#6a6a6a" stroke-width="1.2"/><path d="M1060.7 259.3 H1104.1 M1123.9 259.3 H1167.8" stroke="#292929" stroke-width="1"/><path d="M1055.2 268.3 H1060.2 M1168.5 268.3 H1173.7" stroke="#6a6a6a" stroke-width="1.2"/><path d="M1060.7 268.3 H1104.1 M1123.9 268.3 H1167.8" stroke="#292929" stroke-width="1"/><path d="M1055.2 277.4 H1060.2 M1168.5 277.4 H1173.7" stroke="#6a6a6a" stroke-width="1.2"/><path d="M1060.7 277.4 H1104.1 M1123.9 277.4 H1167.8" stroke="#292929" stroke-width="1"/><path d="M1055.2 286.4 H1060.2 M1168.5 286.4 H1173.7" stroke="#6a6a6a" stroke-width="1.2"/><path d="M1060.7 286.4 H1104.1 M1123.9 286.4 H1167.8" stroke="#292929" stroke-width="1"/><path d="M1055.2 295.4 H1060.2 M1168.5 295.4 H1173.7" stroke="#6a6a6a" stroke-width="1.2"/><path d="M1060.7 295.4 H1104.1 M1123.9 295.4 H1167.8" stroke="#292929" stroke-width="1"/><path d="M1055.2 333 H1060.2 M1168.5 333 H1173.7" stroke="#6a6a6a" stroke-width="1.2"/><path d="M1055.2 366.7 H1060.2 M1168.5 366.7 H1173.7" stroke="#6a6a6a" stroke-width="1.2"/><path d="M1055.2 396.5 H1060.2 M1168.5 396.5 H1173.7" stroke="#6a6a6a" stroke-width="1.2"/><path d="M1055.2 421.5 H1060.2 M1168.5 421.5 H1173.7" stroke="#6a6a6a" stroke-width="1.2"/><path d="M1055.2 441.7 H1060.2 M1168.5 441.7 H1173.7" stroke="#6a6a6a" stroke-width="1.2"/><path d="M1055.2 457.8 H1060.2 M1168.5 457.8 H1173.7" stroke="#6a6a6a" stroke-width="1.2"/><rect x="1060.7" y="331.7" width="43.4" height="151.6" fill="url(#mb)"/><rect x="1060.7" y="331.7" width="43.4" height="8.3" fill="#0a86bc"/><rect x="1123.9" y="348.7" width="43.9" height="134.6" fill="url(#mb)"/><path d="M1060.7 205.7 H1104.1 M1123.9 199.8 H1167.8" stroke="#7e7e7e" stroke-width="1.5"/><path d="M1060.7 212.6 H1104.1 M1123.9 218.7 H1167.8" stroke="#b88c14" stroke-width="1.5"/><text x="1114" y="118.6" font-size="10" fill="#c8c8c8" text-anchor="middle">0</text><text x="1114" y="163.7" font-size="10" fill="#c8c8c8" text-anchor="middle">-5</text><text x="1114" y="208.8" font-size="10" fill="#c8c8c8" text-anchor="middle">-10</text><text x="1114" y="253.9" font-size="10" fill="#c8c8c8" text-anchor="middle">-15</text><text x="1114" y="299" font-size="10" fill="#c8c8c8" text-anchor="middle">-20</text><text x="1114" y="336.6" font-size="10" fill="#c8c8c8" text-anchor="middle">-25</text><text x="1114" y="370.3" font-size="10" fill="#c8c8c8" text-anchor="middle">-30</text><text x="1114" y="400.1" font-size="10" fill="#c8c8c8" text-anchor="middle">-35</text><text x="1114" y="425.1" font-size="10" fill="#c8c8c8" text-anchor="middle">-40</text><text x="1114" y="461.4" font-size="10" fill="#c8c8c8" text-anchor="middle">-50</text><text x="1082.4" y="477.6" font-size="11" font-weight="bold" fill="#3f86a6" text-anchor="middle">L</text><text x="1145.8" y="477.6" font-size="11" font-weight="bold" fill="#3f86a6" text-anchor="middle">R</text></svg>
<svg width="1200" height="920" viewBox="0 0 1200 920"><path d="M54 548 L310.1 804 M310.1 548 L54 804" stroke="#8e8e8e" stroke-width="1.1"/><text x="46.3" y="544.7" font-size="10" fill="#d0d0d0">L</text><text x="311.5" y="544.7" font-size="10" fill="#d0d0d0">R</text><path d="M189.1 726.9 L188.2 726.8 L188.1 726 L188.7 724.5 L190 722.6 L191.9 720.4 L194.1 718.1 L196.4 716 L198.3 714.1 L199.8 712.5 L200.6 711.1 L201 709.9 L200.9 708.8 L200.6 707.7 L200.4 706.7 L200.4 705.6 L200.7 704.4 L201.5 703 L202.6 701.4 L203.8 699.5 L205 697.2 L206 694.5 L206.7 691.4 L206.9 688 L206.6 684.7 L205.9 681.5 L204.7 678.8 L203 676.9 L200.8 675.7 L198.2 675.3 L195.1 675.4 L191.5 675.6 L187.6 675.4 L183.6 674.3 L179.7 672.2 L176.4 668.7 L173.9 664.1 L172.6 658.8 L172.8 653.2 L174.3 648.2 L177 644.3 L180.6 642 L184.4 641.6 L187.9 642.9 L190.5 645.5 L191.8 648.7 L191.6 651.8 L190 654.2 L187.3 655.4 L184 655 L180.7 653.4 L177.9 650.9 L176.1 648.1 L175.3 645.7 L175.6 644.3 L176.7 644.1 L178.2 645.3 L179.5 647.6 L180.4 650.5 L180.5 653.6 L179.9 656.3 L178.6 658.1 L177.1 659 L175.8 659.2 L175 658.9 L175.1 658.9 L176.3 659.5 L178.4 661.2 L181.1 664.1 L184.1 668 L186.8 672.7 L188.9 677.5 L190.1 681.6 L190.2 684.7 L189.4 686.2 L188 686.2 L186.2 684.9 L184.6 682.7 L183.5 680.4 L183.1 678.3 L183.4 677.1 L184.3 676.9 L185.8 677.6 L187.4 678.8 L189 680.1 L190.3 680.7 L191.2 680.1 L191.5 678.1 L191.4 674.5 L190.9 669.8 L190.1 664.3 L189 658.7 L187.8 653.8 L186.5 650.1 L185.1 648 L183.6 647.6 L182.1 648.8 L180.7 651.2 L179.6 654.4 L178.8 658 L178.5 661.5 L178.7 664.9 L179.3 668 L180.3 670.9 L181.4 673.9 L182.3 677 L182.9 680.5 L182.9 684.4 L182.4 688.6 L181.3 692.9 L180 697.1 L178.6 700.8 L177.6 704 L177.1 706.4 L177.5 708 L178.8 708.9 L180.9 709.1 L183.5 708.8 L186.3 708.1 L189 707 L191.1 705.8 L192.7 704.2 L193.5 702.5 L193.6 700.5 L193.2 698.3 L192.7 695.9 L192.2 693.5 L191.9 690.9 L192 688.3 L192.3 685.5 L192.9 682.5 L193.6 679.1 L194.1 675.2 L194.3 670.9 L194.1 666.2 L193.4 661.2 L192.2 656.5 L190.6 652.3 L188.7 649.1 L186.5 647.2 L183.9 646.9 L180.9 648 L177.5 650.4 L173.7 653.4 L169.7 656.5 L165.5 659 L161.6 660.7 L158.4 661.1 L156.2 660.4 L155.4 659 L156.3 657.4 L158.8 656.4 L162.9 656.7 L167.9 658.8 L173.4 662.8 L178.7 668.6 L183.1 675.6 L186.3 683 L187.9 690 L188.1 695.7 L187.1 699.5 L185.4 701.3 L183.6 700.9 L182.2 699 L181.6 696.2 L182 693.1 L183.2 690.4 L185 688.6 L186.9 687.6 L188.4 687.3 L189.2 687.3 L189 686.9 L187.9 685.8 L186 683.5 L183.7 680 L181.5 675.5 L179.9 670.6 L179.1 666 L179.3 662.1 L180.4 659.7 L182 658.8 L183.8 659.5 L185.2 661.3 L186 663.8 L185.7 666.2 L184.3 668.1 L182 669 L179.1 669 L176 668.1 L173.1 666.9 L170.9 666 L169.5 665.9 L169 667 L169.4 669.7 L170.5 673.6 L172.1 678.4 L173.8 683.5 L175.5 688.2 L176.9 692 L178 694.5 L178.7 695.5 L179.1 695.2 L179.2 694.1 L179 692.6 L178.6 691.2 L177.9 690.7 L177.2 691.1 L176.3 692.6 L175.5 695.1 L174.9 698.2 L174.6 701.7 L174.8 705.2 L175.6 708.3 L176.8 710.9 L178.5 713 L180.4 714.7 L182.2 716.2 L183.7 717.5 L184.5 718.9 L184.5 720.3 L183.8 721.6 L182.4 722.8 L180.7 723.7 L179 724.1 L177.7 724.1 L177.3 723.5 L177.7 722.5 L179.2 721.1 L181.5 719.5 L184.3 717.7 L187.3 715.9 L190.1 714 L192.4 712.1 L194 710.2 L194.9 708.3 L195.3 706.4 L195.3 704.6 L195.3 703.1 L195.5 701.8 L196.2 700.8 L197.3 700 L198.9 699.2 L200.7 698.3 L202.6 696.8 L204.3 694.6 L205.7 691.5 L206.5 687.5 L206.9 682.7 L206.7 677.7 L206.2 672.7 L205.3 668.5 L204 665.3 L202.3 663.4 L200.1 662.8 L197.3 663.1 L194 663.9 L190.1 664.3 L185.8 663.7 L181.6 661.7 L177.7 657.9 L174.8 652.5 L173.2 645.9 L173.1 639 L174.7 632.5 L177.7 627.5 L181.7 624.5 L186.1 623.9 L190.3 625.5 L193.7 628.9 L195.7 633.3 L196.2 637.7 L195.2 641.4 L193.1 643.7 L190.4 644.3 L187.7 643.4 L185.5 641.5 L184.1 639.2 L183.8 637.3 L184.5 636.5 L185.8 637.2 L187.4 639.3 L188.7 642.7 L189.4 646.8 L189.2 650.9 L188.4 654.4 L187 656.9 L185.5 658.3 L184.4 658.7 L184 658.6 L184.8 658.5 L186.7 659.1 L189.6 660.8 L193.1 663.8 L196.7 668 L199.9 672.9 L202.4 678 L203.7 682.5 L203.8 686 L202.8 687.8 L201.1 688 L199 686.8 L196.9 684.6 L195.3 682.1 L194.4 679.8 L194.3 678.1 L194.9 677.5 L196 677.7 L197.5 678.6 L199.1 679.5 L200.6 680.1 L201.7 679.8 L202.4 678.4 L202.5 675.8 L202.2 672.1 L201.3 667.9 L200 663.6 L198.2 659.8 L196.1 657 L193.7 655.5 L191.3 655.3 L188.9 656.5 L186.9 658.9 L185.4 662 L184.7 665.8 L184.7 669.9 L185.4 674.3 L186.8 678.8 L188.4 683.4 L189.9 688.3 L191 693.3 L191.4 698.5 L190.9 703.6 L189.6 708.5 L187.7 713 L185.5 717 L183.5 720.3 L182.1 722.8 L181.6 724.6 L182.2 725.8 L183.7 726.3 L186.1 726.3 L188.9 725.9 L191.7 724.9 L194.1 723.4 L195.7 721.2 L196.4 718.4 L196.3 715.1 L195.4 711.4 L194.2 707.5 L192.9 703.7 L191.8 700.1 L191.2 697 L191 694.1 L191.1 691.5 L191.5 688.9 L191.8 685.9 L191.8 682.2 L191.3 677.6 L190.3 672.3 L188.9 666.4 L187 660.4 L184.8 655.1 L182.5 651 L180 648.6 L177.3 648.3 L174.2 650.1 L170.8 653.5 L166.8 657.9 L162.5 662.6 L157.9 666.5 L153.5 669.1 L149.6 670.1 L146.8 669.3 L145.5 667.3 L145.9 664.7 L148.2 662.6 L152.2 661.8 L157.3 662.8 L163.1 666.1 L168.7 671.4 L173.5 678.2 L177 685.6 L179.1 692.5 L179.6 698 L179 701.4 L177.7 702.5 L176.2 701.2 L175.1 698.1 L174.7 693.9 L175.1 689.4 L176.2 685.5 L177.6 682.4 L178.9 680.4 L179.6 679.1 L179.5 678.2 L178.5 677 L176.5 675 L173.9 671.8 L171.1 667.4 L168.8 662 L167.2 656.3 L166.6 650.8 L167.3 646.3 L168.8 643.3 L171 642.1 L173.2 642.6 L175.1 644.6 L176.1 647.4 L176 650.3 L174.8 652.8 L172.6 654.5 L169.8 655.2 L166.7 655.1 L163.9 654.7 L161.6 654.3 L160.2 654.6 L159.7 655.9 L160.2 658.4 L161.5 662.1 L163.4 666.5 L165.7 671.3 L168.1 675.8 L170.4 679.5 L172.5 682.3 L174.2 683.8 L175.4 684.2 L176.1 683.8 L176.3 683 L175.8 682.2 L174.9 681.7 L173.7 681.7 L172.3 682.3 L171 683.6 L170.1 685.3 L169.8 687.4 L170.3 689.7 L171.7 692.1 L173.9 694.6 L176.6 697.1 L179.5 699.8 L182.1 702.6 L184 705.4 L185 708.1 L184.9 710.6 L183.9 712.8 L182.1 714.4 L180.1 715.4 L178.4 715.9 L177.4 716 L177.4 715.7 L178.8 715.3 L181.2 714.9 L184.6 714.5 L188.4 714.1 L192.1 713.6 L195.5 712.9 L198 711.9 L199.7 710.4 L200.6 708.6 L200.9 706.5 L201 704.6 L201.3 702.9 L202 701.8 L203.3 701.4 L205.1 701.5 L207.4 702 L209.9 702.2 L212.2 701.9 L214.1 700.5 L215.5 697.6 L216.3 693.3 L216.4 687.8 L216.1 681.5 L215.4 675.3 L214.4 669.8 L213.2 665.6 L211.6 663.3 L209.6 662.7 L206.9 663.5 L203.5 665.1 L199.4 666.5 L194.8 666.9 L190.1 665.6 L185.7 662.2 L182.1 656.7 L179.8 649.8 L179.2 642.3 L180.2 635.3 L182.9 629.8 L186.6 626.6 L190.9 626 L195.1 628.2 L198.5 632.4 L200.8 637.8 L201.6 643.5 L201 648.5 L199.4 652.1 L197.3 653.9 L195.1 654.1 L193.4 653.2 L192.5 651.8 L192.4 650.7 L193.1 650.7 L194.1 652.1 L195.1 655 L195.7 659.1 L195.6 663.8 L194.6 668.4 L193 672.3 L191.1 675.1 L189.2 676.5 L188 676.8 L187.7 676.5 L188.7 676 L190.8 676.1 L194 677.2 L197.7 679.6 L201.4 683 L204.7 687.3 L207 691.8 L208 695.8 L207.8 698.8 L206.5 700.4 L204.3 700.5 L201.6 699.1 L199 696.8 L196.7 694 L195 691.2 L194 688.9 L193.8 687.2 L194.2 686.3 L195.2 686 L196.4 685.8 L197.8 685.6 L199 684.8 L199.9 683.4 L200.4 681.3 L200.4 678.6 L199.6 675.6 L198.1 672.7 L195.9 670 L193.1 668 L189.8 666.7 L186.4 666.4 L183.2 666.9 L180.5 668.2 L178.7 670.3 L178 673.2 L178.5 676.8 L179.9 681.1 L182 686.1 L184.4 691.7 L186.5 697.6 L187.9 703.8 L188.3 709.8 L187.5 715.4 L185.7 720.2 L183.2 724 L180.5 726.9 L178.2 728.7 L176.7 729.7 L176.3 730.1 L177.3 730 L179.4 729.5 L182.3 728.8 L185.4 727.6 L188.4 725.9 L190.6 723.3 L191.8 719.9 L191.9 715.5 L191.1 710.2 L189.6 704.4 L187.9 698.5 L186.3 692.9 L185.2 687.9 L184.6 683.9 L184.7 680.8 L185.1 678.4 L185.7 676.2 L186.1 673.7 L186 670.4 L185.4 666 L184.2 660.4 L182.5 653.9 L180.4 647.2 L178.2 640.9 L176 636 L173.7 633.2 L171.4 632.8 L168.9 635.1 L166 639.4 L162.6 645 L158.7 651 L154.5 656.3 L150.3 659.9 L146.6 661.6 L143.9 661 L142.6 658.9 L143.1 655.8 L145.5 653 L149.5 651.2 L154.8 651.4 L160.7 653.9 L166.6 658.6 L171.8 664.8 L175.8 671.7 L178.5 678.2 L179.8 683.4 L180.1 686.5 L179.8 687.1 L179.3 685.4 L179.1 681.8 L179.3 677.1 L180.1 672.2 L181.2 667.7 L182.4 664.2 L183.2 661.7 L183.2 660.1 L182.3 658.9 L180.4 657.4 L177.7 655.3 L174.7 652.1 L171.8 647.8 L169.5 642.6 L168.2 637.1 L168.1 632 L169.2 627.9 L171.3 625.4 L174 624.6 L176.7 625.7 L178.9 628.2 L180.3 631.7 L180.6 635.6 L179.7 639.3 L177.9 642.4 L175.3 644.8 L172.5 646.5 L169.8 647.8 L167.6 649 L166.1 650.5 L165.4 652.7 L165.7 655.6 L166.8 659.2 L168.6 663.3 L171 667.6 L173.7 671.8 L176.6 675.5 L179.3 678.6 L181.7 680.9 L183.6 682.6 L184.7 683.7 L185 684.3 L184.3 684.8 L182.8 685.1 L180.7 685.3 L178.3 685.6 L176.1 686 L174.4 686.6 L173.6 687.4 L173.9 688.6 L175.5 690.4 L178 693 L181.2 696.2 L184.4 700.2 L187.3 704.6 L189.2 709.3 L189.9 713.9 L189.3 718 L187.6 721.4 L185.1 723.9 L182.6 725.4 L180.5 726.3 L179.3 726.7 L179.6 727 L181.2 727.4 L184.2 728.1 L188 729.1 L192.1 730.2 L196 731.2 L199.2 731.6 L201.4 731.3 L202.6 730.2 L202.9 728.2 L202.7 725.8 L202.4 723.3 L202.5 721.1 L203.1 719.8 L204.5 719.4 L206.6 719.9 L209 720.9 L211.5 721.9 L213.7 722.2 L215.4 721.1 L216.3 718.2 L216.4 713.3 L215.9 706.8 L214.8 699.2 L213.5 691.4 L212 684.2 L210.3 678.7 L208.4 675.2 L206.1 673.8 L203.2 674.3 L199.6 675.8 L195.2 677.5 L190.3 678.2 L185.1 677.1 L180.2 673.8 L176.1 668.4 L173.2 661.2 L171.8 653.3 L172.2 645.8 L174 639.7 L177.1 636 L180.7 635 L184.4 636.8 L187.5 640.9 L189.6 646.4 L190.6 652.3 L190.6 657.6 L189.7 661.6 L188.5 663.9 L187.3 664.6 L186.5 664.2 L186.3 663.3 L186.6 662.6 L187.4 662.8 L188.2 664.3 L188.7 667 L188.5 670.7 L187.6 674.9 L185.9 678.9 L183.7 682.1 L181.4 684.2 L179.4 684.9 L178.3 684.4 L178.3 683.2 L179.7 681.8 L182.2 680.7 L185.7 680.5 L189.7 681.4 L193.6 683.2 L197 685.8 L199.3 688.6 L200.5 691.2 L200.4 693.1 L199.3 693.9 L197.2 693.5 L194.7 692.1 L192 689.7 L189.6 686.8 L187.6 683.8 L186.2 680.9 L185.5 678.4 L185.6 676.2 L186.3 674.4 L187.5 672.8 L189.1 671.4 L190.9 669.9 L192.6 668.4 L194.1 666.9 L195 665.4 L195.1 664 L194.2 662.8 L192.3 661.9 L189.6 661.1 L186.1 660.6 L182.5 660.2 L179 660.2 L176.4 660.6 L174.8 661.6 L174.7 663.4 L176 666.2 L178.5 670.3 L181.8 675.5 L185.2 681.8 L188.3 688.8 L190.4 696 L191.2 702.8 L190.6 708.9 L188.9 713.7 L186.4 717.1 L183.8 719 L181.8 719.7 L180.7 719.5 L181 718.7 L182.7 717.8 L185.5 716.8 L189.1 715.8 L192.7 714.5 L195.9 712.6 L198.1 709.9 L199.1 705.9 L199 700.7 L197.8 694.5 L196 687.6 L194.2 680.6 L192.6 674.1 L191.7 668.7 L191.6 664.7 L192.1 662.2 L193 660.7 L194 659.9 L194.7 658.9 L194.8 657.1 L194.3 654 L193.1 649.5 L191.3 643.8 L189.3 637.6 L187.1 631.7 L185.1 627.1 L183.1 624.7 L181.2 624.9 L179.2 628 L176.8 633.4 L174 640.3 L170.7 647.7 L167 654.4 L163.3 659.5 L160 662.3 L157.6 662.8 L156.4 661.4 L156.9 658.8 L159 656 L162.6 654.2 L167.3 654.1 L172.6 656 L177.9 660 L182.7 665.6 L186.6 671.8 L189.3 677.8 L191 682.5 L191.9 685.3 L192.4 685.9 L192.7 684.3 L193.1 681 L193.7 676.7 L194.6 672.1 L195.4 668 L195.8 664.6 L195.5 662.2 L194.2 660.6 L192 659.3 L188.9 658 L185.2 656 L181.3 653.2 L177.9 649.6 L175.3 645.3 L173.9 640.7 L173.7 636.6 L174.8 633.4 L176.8 631.5 L179.3 631.3 L181.8 632.7 L183.8 635.4 L185 639.2 L185.2 643.5 L184.3 647.9 L182.5 652.1 L180 655.8 L177.2 659.1 L174.4 662 L171.8 664.6 L169.8 667.2 L168.4 669.9 L167.8 672.6 L168 675.5 L169 678.4 L170.8 681.3 L173.1 684.1 L175.8 686.7 L178.6 689.1 L181.1 691.4 L183.1 693.5 L184.3 695.4 L184.3 697.1 L183.1 698.4 L180.7 699.1 L177.6 699.2 L174 698.8 L170.5 697.8 L167.7 696.6 L166.1 695.6 L165.9 695.1 L167.1 695.6 L169.5 697.4 L172.6 700.5 L175.8 704.9 L178.5 710.3 L180.2 716.1 L180.4 721.8 L179.3 726.8 L177 730.8 L174 733.5 L171 735 L168.7 735.7 L167.6 735.8 L168 736.1 L170 736.6 L173.2 737.7 L177.3 739.3 L181.5 741.1 L185.3 742.6 L188.3 743.4 L190.1 743.1 L190.8 741.5 L190.7 738.7 L190.2 735.2 L189.7 731.4 L189.7 727.9 L190.4 725.4 L192 724.1 L194.3 723.9 L197 724.5 L199.6 725.2 L201.8 725.3 L203.4 723.9 L204.1 720.5 L203.9 714.8 L203 707.2 L201.7 698.3 L200 689 L198.3 680.3 L196.4 673.2 L194.4 668.2 L192.2 665.7 L189.4 665.2 L186 666.1 L182 667.3 L177.5 667.9 L172.7 666.9 L168.2 663.9 L164.4 658.8 L161.7 652 L160.3 644.5 L160.5 637.1 L162 631.2 L164.6 627.3 L167.8 626.1 L171.1 627.5 L174.1 631.2 L176.4 636.2 L178 641.8 L179 647 L179.5 651.2 L179.9 654 L180.4 655.4 L181.2 655.8 L182.4 655.8 L183.8 655.8 L185.1 656.5 L186.2 658.2 L186.6 660.8 L186.1 664.1 L184.8 667.7 L182.9 670.9 L180.6 673.5 L178.4 674.9 L176.8 675.2 L176.2 674.4 L176.9 672.9 L178.8 671.2 L181.9 669.6 L185.9 668.6 L190.1 668.4 L194.3 669 L197.8 670.1 L200.5 671.6 L202.1 673.1 L202.5 674.4 L201.9 675.1 L200.6 675.1 L198.7 674.5 L196.5 673.3 L194.4 671.7 L192.4 669.7 L190.9 667.6 L190 665.3 L189.7 662.9 L190.2 660.6 L191.4 658.5 L193.3 656.6 L195.6 655.2 L198.2 654.4 L200.6 654.2 L202.5 654.7 L203.6 655.8 L203.5 657.2 L202.2 658.8 L199.7 660.3 L196.4 661.4 L192.8 662.1 L189.3 662.3 L186.7 662.5 L185.3 662.9 L185.6 664.2 L187.4 666.7 L190.5 670.7 L194.4 676.3 L198.5 683.3 L202 691.3 L204.4 699.5 L205.3 707.3 L204.7 714 L202.9 719.1 L200.4 722.4 L197.8 723.9 L195.9 724 L195 723.1 L195.6 721.9 L197.5 720.6 L200.5 719.6 L204 718.8 L207.5 717.8 L210.3 716.4 L211.9 713.9 L212.3 710.1 L211.4 704.9 L209.6 698.4 L207.2 691.2 L204.9 683.9 L203.1 677.3 L202 672 L201.8 668.4 L202.3 666.6 L203.2 666.3 L204.1 666.8 L204.7 667.4 L204.6 667.2 L203.8 665.7 L202.3 662.6 L200.3 658.2 L197.9 653 L195.5 647.9 L193.1 643.9 L191 641.8 L188.9 642.4 L186.8 645.6 L184.5 651.1 L181.8 658.3 L178.7 665.9 L175.3 672.9 L172 678.4 L168.9 681.8 L166.6 682.8 L165.3 681.8 L165.4 679.5 L166.7 676.8 L169.3 674.6 L172.7 673.7 L176.6 674.5 L180.6 677 L184.1 680.8 L187.1 685.3 L189.3 689.5 L190.9 692.7 L192.1 694.3 L193 694.2 L193.8 692.2 L194.7 688.9 L195.6 684.7 L196.3 680.3 L196.6 676.1 L196.1 672.6 L194.6 669.8 L192 667.6 L188.5 665.7 L184.2 663.8 L179.5 661.4 L175 658.6 L171.2 655.1 L168.4 651.3 L166.9 647.4 L166.7 643.8 L167.6 641 L169.4 639.3 L171.5 638.8 L173.7 639.6 L175.4 641.5 L176.4 644.3 L176.6 647.8 L175.9 651.7 L174.5 655.8 L172.5 659.8 L170.1 663.7 L167.6 667.3 L165.1 670.6 L162.8 673.5 L161 675.9 L159.8 677.7 L159.2 679.1 L159.5 679.9 L160.7 680.5 L162.6 680.9 L165.1 681.4 L168 682.3 L170.8 683.6 L173.1 685.3 L174.5 687.4 L174.7 689.4 L173.5 691.1 L170.9 692 L167.4 691.9 L163.4 690.6 L159.4 688.4 L156.3 685.6 L154.3 682.8 L154 680.6 L155.2 679.8 L157.6 680.6 L160.9 683.3 L164.3 687.8 L167.1 693.7 L168.9 700.2 L169.2 706.7 L168.2 712.4 L166 716.8 L163.4 719.8 L160.8 721.4 L159.1 722.1 L158.7 722.3 L159.8 722.6 L162.5 723.5 L166.3 725 L170.9 727.1 L175.4 729.5 L179.4 731.5 L182.4 732.6 L184.2 732.4 L184.9 730.7 L184.9 727.5 L184.5 723.3 L184.3 718.7 L184.6 714.4 L185.8 711.1 L187.8 709.1 L190.5 708.3 L193.5 708.6 L196.5 709.2 L199 709.2 L200.7 707.9 L201.5 704.7 L201.5 699.2 L200.7 691.8 L199.4 682.9 L197.7 673.6 L196 664.7 L194.2 657.3 L192.3 652 L190.2 649.1 L187.8 648.3 L184.8 649 L181.5 650.3 L177.7 651.3 L173.9 651.1 L170.3 649.2 L167.3 645.7 L165.2 640.7 L164.2 635 L164.4 629.5 L165.6 625 L167.7 622.4 L170.2 621.9 L172.9 623.7 L175.4 627.4 L177.7 632.4 L179.7 637.9 L181.4 643.3 L183.1 648 L185 651.6 L187 654.2 L189.3 656.1 L191.7 657.5 L193.9 658.9 L195.6 660.7 L196.6 663 L196.6 665.8 L195.7 669 L193.8 672.2 L191.4 675 L188.8 677.1 L186.5 678.4 L185 678.7 L184.5 678.2 L185.3 677.1 L187.3 675.7 L190.3 674.4 L193.9 673.2 L197.7 672.5 L201.4 672.2 L204.5 672.3 L206.8 672.7 L208.3 673.4 L208.8 674.2 L208.5 675.1 L207.5 675.9 L205.9 676.7 L204 677.2 L201.9 677.3 L199.7 677 L197.8 676.2 L196.2 674.7 L195.2 672.8 L194.9 670.4 L195.5 668 L197 665.9 L199.1 664.5 L201.8 664.2 L204.4 665 L206.7 667.1 L208.2 670.2 L208.4 673.9 L207.3 677.6 L205 680.9 L201.6 683.4 L197.8 684.8 L194.2 685.1 L191.3 684.9 L189.8 684.6 L189.9 684.9 L191.5 686.4 L194.5 689.6 L198.2 694.7 L202 701.3 L205.1 709.1 L207.1 717.1 L207.7 724.7 L206.7 731.1 L204.7 735.6 L202 738.1 L199.3 738.7 L197.3 737.8 L196.4 735.9 L196.9 733.8 L198.7 731.8 L201.3 730.2 L204.4 729 L207.2 727.8 L209.2 726.2 L210.1 723.5 L209.6 719.6 L208 714.1 L205.5 707.3 L202.7 699.7 L200 692 L198 685.1 L196.7 679.5 L196.4 675.8 L196.7 674 L197.5 673.9 L198.4 674.8 L198.9 675.9 L198.8 676.4 L197.9 675.7 L196.4 673.6 L194.4 670 L192 665.5 L189.6 660.9 L187.3 657.1 L185 655 L182.9 655 L180.9 657.3 L178.7 661.7 L176.3 667.6 L173.7 673.9 L171 679.8 L168.4 684.4 L166.1 687.2 L164.4 687.9 L163.6 686.9 L163.7 684.5 L164.7 681.7 L166.5 679 L168.9 677.1 L171.6 676.5 L174.3 677 L176.8 678.5 L179 680.4 L181 682.2 L182.7 683.4 L184.4 683.4 L186.2 682.2 L188 679.8 L189.9 676.5 L191.5 672.6 L192.6 668.5 L192.9 664.6 L192.2 661.1 L190.3 658.1 L187.2 655.4 L183.1 653 L178.5 650.6 L173.8 648 L169.5 645.2 L166 642.2 L163.7 639.2 L162.7 636.2 L162.9 633.6 L164.1 631.6 L165.9 630.2 L168.1 629.6 L170.3 629.8 L172.1 630.9 L173.4 632.7 L174.1 635.2 L174.1 638.4 L173.6 642.1 L172.7 646.3 L171.3 650.7 L169.6 655.1 L167.8 659.1 L166 662.5 L164.3 665.1 L162.9 666.5 L162.1 666.8 L162 666.3 L162.8 665.1 L164.5 663.7 L167 662.7 L169.9 662.4 L173 663.1 L175.7 664.8 L177.5 667.3 L178.1 670.1 L177.2 672.7 L174.9 674.4 L171.6 674.9 L167.7 674 L163.9 671.8 L160.8 668.7 L159 665.5 L158.7 662.9 L159.9 661.7 L162.4 662.5 L165.6 665.5 L168.9 670.6 L171.7 677.2 L173.4 684.7 L173.9 692.2 L173.1 699 L171.3 704.5 L169.2 708.4 L167.3 710.9 L166.3 712.4 L166.6 713.4 L168.3 714.5 L171.4 716.2 L175.5 718.6 L180 721.6 L184.4 724.8 L188.1 727.6 L190.8 729.4 L192.3 729.8 L192.8 728.5 L192.5 725.6 L192 721.5 L191.8 716.9 L192.1 712.5 L193.1 709 L195 706.7 L197.5 705.8 L200.3 705.8 L203 706.3 L205.2 706.5 L206.7 705.6 L207.3 703 L207 698.4 L205.9 692.1 L204.4 684.4 L202.4 676.1 L200.3 668.2 L198.1 661.5 L195.8 656.6 L193.3 653.8 L190.6 652.9 L187.7 653.4 L184.5 654.7 L181.2 656 L177.9 656.5 L174.9 655.9 L172.5 654.1 L170.7 651.2 L169.8 647.8 L169.6 644.5 L170.2 642 L171.2 640.7 L172.5 641.1 L173.9 643.1 L175.4 646.4 L176.9 650.8 L178.6 655.6 L180.4 660.4 L182.6 664.7 L185.1 668.5 L188 671.6 L191 674.2 L193.8 676.5 L196.2 678.7 L197.8 680.9 L198.3 683.2 L197.6 685.6 L195.8 687.9 L193.1 690 L190 691.6 L186.9 692.7 L184.2 693.1 L182.4 692.9 L181.7 692.2 L182.1 691 L183.6 689.6 L185.9 688 L188.6 686.3 L191.5 684.7 L194.2 683.1 L196.5 681.7 L198.2 680.6 L199.2 679.9 L199.6 679.7 L199.4 680.1 L198.6 681 L197.4 682.3 L195.8 683.7 L193.8 685.1 L191.6 685.9 L189.4 685.9 L187.3 684.9 L185.7 683 L184.8 680.3 L184.8 677.3 L185.8 674.5 L187.6 672.5 L190.1 671.8 L192.8 672.7 L195.3 675.2 L197.1 678.9 L197.7 683.5 L197 688.1 L195.1 692.1 L192.2 694.9 L188.7 696.3 L185.4 696.3 L182.9 695.2 L181.5 693.7 L181.6 692.6 L183.2 692.7 L185.9 694.4 L189.3 697.9 L192.8 703.2 L195.6 709.6 L197.3 716.4 L197.7 722.8 L196.9 727.9 L195 731.3 L192.8 732.7 L190.6 732.2 L189.1 730.3 L188.7 727.5 L189.6 724.5 L191.5 721.9 L194.1 719.7 L196.9 718 L199.5 716.4 L201.1 714.5 L201.7 711.8 L201.1 707.8 L199.4 702.4 L197 695.9 L194.5 688.5 L192.2 681.1 L190.5 674.3 L189.6 668.9 L189.6 665.3 L190.3 663.6 L191.5 663.5 L192.7 664.5 L193.6 665.9 L194 667 L193.8 667.1 L193 665.9 L191.7 663.5 L190 660.3 L188.2 656.8 L186.4 653.9 L184.6 652.1 L182.9 651.9 L181.2 653.6 L179.6 656.8 L177.8 661.2 L176.1 666.1 L174.4 670.7 L173 674.3 L171.9 676.6 L171.3 677.4 L171.3 676.8 L171.9 675.1 L173 672.9 L174.5 670.6 L176.2 668.8 L178 667.6 L179.7 667 L181.4 667 L183 667.3 L184.8 667.5 L186.8 667.3 L189.1 666.6 L191.7 665.2 L194.5 663.2 L197.2 660.8 L199.6 658.1 L201.2 655.4 L201.8 652.7 L201.1 650.2 L199.1 648 L195.9 645.8 L191.9 643.8 L187.4 641.8 L183 639.8 L179.1 637.9 L176.2 636.2 L174.4 634.6 L173.7 633.3 L174.2 632.3 L175.4 631.6 L177.2 631.3 L179.2 631.2 L181.1 631.5 L182.8 632.2 L184.1 633.5 L185 635.4 L185.5 638.1 L185.6 641.7 L185.3 646 L184.7 651 L183.7 656.1 L182.4 661 L180.8 665.2 L179 668.2 L177.3 669.7 L176 669.8 L175.3 668.5 L175.4 666.4 L176.4 664.1 L178.2 662.1 L180.6 661.2 L183.2 661.5 L185.6 663.3 L187.2 666.1 L187.6 669.6 L186.7 673 L184.5 675.7 L181.3 677.1 L177.5 676.9 L173.7 675.3 L170.6 672.7 L168.6 669.8 L168 667.4 L168.7 666.4 L170.6 667.4 L173.1 670.6 L175.6 675.8 L177.7 682.7 L178.8 690.5 L178.9 698.4 L177.9 705.6 L176.2 711.5 L174.4 716 L172.8 719.1 L172.1 721.1 L172.6 722.6 L174.3 724.2 L177.2 726.2 L180.8 728.8 L184.7 731.9 L188.3 735.1 L191.2 737.8 L193 739.6 L193.8 739.8 L193.7 738.5 L192.9 735.5 L192 731.4 L191.3 726.6 L191.1 721.9 L191.7 717.8 L192.9 714.8 L194.7 713 L196.7 712.1 L198.7 711.7 L200.2 711.1 L201.1 709.8 L201.2 707.3 L200.6 703.2 L199.3 697.6 L197.4 691 L195.1 683.8 L192.6 676.9 L189.9 670.9 L187.1 666.2 L184.2 663.1 L181.2 661.6 L178.1 661.2 L175 661.7 L172 662.3 L169.4 662.7 L167.1 662.4 L165.3 661.5 L164 660 L163.3 658.2 L163 656.5 L163 655.3 L163.2 654.9 L163.5 655.4 L163.9 656.9 L164.5 659.2 L165.3 662.1 L166.6 665.3 L168.5 668.5 L171 671.7 L174.1 674.6 L177.6 677.2 L181.1 679.6 L184.4 681.8 L187 683.9 L188.6 685.8 L188.9 687.4 L187.9 688.7 L185.8 689.6 L182.9 690.1 L179.6 690.2 L176.5 689.8 L173.9 689.1 L172.2 688.1 L171.5 686.9 L171.9 685.5 L173.1 683.9 L175 682 L177.2 679.8 L179.4 677.4 L181.5 674.8 L183.3 672.1 L184.7 669.7 L185.7 667.8 L186.4 666.6 L186.7 666.5 L186.7 667.3 L186.3 669 L185.4 671.2 L184.2 673.5 L182.6 675.3 L180.8 676.3 L179 676 L177.5 674.5 L176.6 671.9 L176.5 668.9 L177.4 665.9 L179.3 663.6 L181.8 662.8 L184.7 663.6 L187.5 666.2 L189.7 670.3 L191 675.3 L191.1 680.3 L190 684.8 L188.1 688 L185.6 689.5 L183.3 689.5 L181.5 688.3 L180.8 686.4 L181.3 684.8 L183 684.1 L185.6 684.8 L188.8 687.3 L191.8 691.4 L194.4 696.6 L196 702.3 L196.4 707.7 L195.9 712 L194.6 714.8 L193.1 715.8 L191.8 715.1 L191.1 713.3 L191.4 710.7 L192.7 708 L194.8 705.6 L197.5 703.7 L200.1 702.4 L202.4 701.2 L203.9 699.9 L204.3 697.8 L203.7 694.7 L202.3 690.5 L200.3 685.2 L198.2 679.3 L196.4 673.3 L195.1 667.8 L194.6 663.5 L194.9 660.8 L195.8 659.7 L197.1 660.1 L198.5 661.5 L199.7 663.4 L200.5 665.1 L200.8 666.2 L200.6 666.5 L199.9 665.8 L198.8 664.3 L197.5 662.6 L196.1 661.2 L194.6 660.4 L193 660.6 L191.4 662 L189.9 664.5 L188.4 667.7 L187.1 671.3 L186 674.7 L185.2 677.5 L184.9 679.5 L185 680.5 L185.4 680.6 L186.2 680 L187.1 678.9 L188 677.6 L188.9 676.3 L189.5 675.2 L190.1 674.3 L190.6 673.5 L191.4 672.7 L192.5 671.9 L194.2 670.9 L196.5 669.8 L199.2 668.5 L202.3 667.2 L205.2 665.8 L207.8 664.4 L209.4 663.1 L209.9 661.7 L209 660.3 L206.7 658.8 L203.3 657.3 L199.2 655.7 L194.7 654.1 L190.5 652.6 L186.8 651.5 L184.1 650.7 L182.4 650.2 L181.8 650.2 L182 650.3 L182.8 650.6 L184 650.8 L185.3 650.9 L186.5 650.9 L187.5 650.9 L188.4 651.2 L189 652.1 L189.5 653.8 L189.7 656.4 L189.8 660.1 L189.4 664.7 L188.7 669.6 L187.6 674.4 L185.9 678.4 L184 681.2 L182 682.4 L180.1 681.9 L178.7 679.9 L177.9 676.9 L178 673.5 L178.9 670.5 L180.4 668.6 L182.2 668.1 L183.8 669.1 L184.9 671.5 L185 674.7 L184 678 L181.9 680.7 L178.9 682.3 L175.4 682.3 L172 681 L169.1 678.7 L167.1 676 L166.3 673.7 L166.6 672.5 L167.8 673.2 L169.5 675.8 L171.2 680.4 L172.5 686.5 L173.1 693.5 L172.9 700.6 L171.9 707.1 L170.5 712.5 L169.1 716.6 L168.1 719.5 L167.9 721.3 L168.7 722.7 L170.5 724 L173.3 725.6 L176.5 727.6 L179.8 730 L182.7 732.3 L185 734.1 L186.3 735.1 L186.7 734.7 L186.3 732.8 L185.4 729.5 L184.4 725 L183.6 720 L183.3 714.9 L183.6 710.2 L184.5 706.4 L185.8 703.5 L187.3 701.4 L188.8 699.8 L190 698.2 L190.7 696.2 L190.9 693.5 L190.4 689.7 L189.3 685 L187.8 679.6 L185.8 673.8 L183.4 668.1 L180.8 663.1 L178.1 658.9 L175.2 655.9 L172.4 654 L169.6 652.9 L167.1 652.6 L164.9 652.5 L163.1 652.6 L161.9 652.6 L161.1 652.4 L160.7 652.1 L160.7 651.8 L160.8 651.7 L160.8 651.8 L160.8 652.3 L160.8 653.2 L160.7 654.4 L160.9 655.9 L161.5 657.7 L162.7 659.6 L164.8 661.6 L167.6 663.7 L171.2 665.9 L175.3 668.1 L179.4 670.4 L183.1 672.7 L185.9 674.7 L187.7 676.5 L188.1 677.8 L187.2 678.6 L185.3 678.7 L182.6 678.4 L179.6 677.6 L176.9 676.5 L174.7 675.4 L173.3 674.3 L172.8 673.3 L173.3 672.3 L174.4 671.2 L175.9 669.9 L177.7 668.1 L179.4 665.9 L181 663.2 L182.4 660.4 L183.6 657.7 L184.7 655.6 L185.6 654.4 L186.4 654.4 L187 655.7 L187.3 658.1 L187.2 661.3 L186.7 664.8 L185.7 668 L184.4 670.2 L183 671.2 L181.7 670.8 L180.9 669.3 L180.8 667 L181.5 664.6 L183.1 662.9 L185.4 662.4 L188 663.6 L190.7 666.4 L192.9 670.7 L194.3 675.9 L194.8 681.3 L194.3 686.1 L193.1 689.6 L191.4 691.7 L189.8 692.1 L188.7 691.3 L188.3 689.8 L188.8 688.3 L190.3 687.4 L192.4 687.8 L194.7 689.7 L197 693 L198.8 697.3 L199.8 702 L199.9 706.5 L199.3 710.2 L198.2 712.6 L197 713.6 L196.1 713.3 L195.8 711.9 L196.3 710 L197.6 708 L199.5 706.3 L201.7 705 L203.8 704.1 L205.5 703.5 L206.4 702.7 L206.4 701.3 L205.6 699.2 L204.1 696.2 L202.2 692.3 L200.2 687.9 L198.6 683.4 L197.4 679.3 L196.8 676.1 L196.9 674.1 L197.5 673.3 L198.4 673.7 L199.5 675 L200.5 676.7 L201.3 678.5 L201.7 680 L201.7 680.9 L201.3 681.2 L200.5 681 L199.4 680.5 L198 680.1 L196.4 679.9 L194.6 680.2 L192.8 681 L191 682.4 L189.4 684 L188.1 685.9 L187.1 687.6 L186.6 689.1 L186.6 690.1 L187 690.7 L187.6 690.9 L188.3 690.7 L188.9 690.1 L189.2 689.3 L189.2 688.3 L188.9 687 L188.4 685.5 L188 683.8 L187.9 682 L188.4 680 L189.6 678 L191.6 676.2 L194.3 674.6 L197.3 673.3 L200.2 672.3 L202.7 671.6 L204.3 670.9 L204.7 670.2 L203.7 669.2 L201.5 668 L198.3 666.5 L194.4 664.8 L190.3 663.1 L186.4 661.6 L183.2 660.5 L180.9 659.9 L179.5 659.8 L178.9 660.1 L179 660.6 L179.6 661.1 L180.3 661.2 L181.2 660.9 L181.9 660.2 L182.6 659.2 L183.2 658.3 L183.8 657.8 L184.3 658 L184.9 659.4 L185.3 661.8 L185.4 665.2 L185.1 669.2 L184.4 673.2 L183.2 676.6 L181.6 678.9 L179.7 679.5 L177.8 678.4 L176.3 675.9 L175.3 672.2 L174.9 668.2 L175.3 664.5 L176.3 661.8 L177.6 660.6 L178.8 660.9 L179.6 662.5 L179.7 665.1 L179 668 L177.4 670.5 L175.1 672.1 L172.6 672.4 L170 671.5 L168 669.7 L166.6 667.5 L166.1 665.7 L166.5 664.8 L167.5 665.4 L168.8 667.7 L170.1 671.6 L171.1 676.9 L171.5 682.9 L171.4 689.1 L170.8 694.8 L170 699.7 L169.3 703.5 L169.2 706.2 L169.7 708.1 L171.1 709.6 L173.3 710.8 L176.1 712.2 L179.1 713.9 L182.1 715.7 L184.7 717.3 L186.6 718.5 L187.8 718.9 L188.1 718.3 L187.8 716.3 L187.2 713.2 L186.4 709.2 L185.8 704.6 L185.6 699.9 L185.8 695.4 L186.4 691.5 L187.4 688.2 L188.6 685.6 L189.8 683.4 L190.9 681.5 L191.6 679.4 L191.9 677 L191.8 674.1 L191.1 670.8 L190 667.1 L188.4 663.2 L186.4 659.5 L184.1 656.2 L181.6 653.3 L178.9 651.1 L176.2 649.5 L173.8 648.5 L171.7 648 L170.1 647.9 L169.1 648.1 L168.6 648.6 L168.6 649.3 L168.9 650.3 L169.3 651.6 L169.7 653 L169.8 654.6 L169.6 656.2 L169.2 657.8 L168.7 659.3 L168.5 660.6 L168.7 661.8 L169.7 663 L171.6 664.2 L174.4 665.7 L177.9 667.5 L181.9 669.6 L185.9 671.9 L189.5 674.3 L192.2 676.5 L193.7 678.3 L194 679.6 L193 680.2 L191 680 L188.3 679.3 L185.5 678.2 L182.8 676.9 L180.7 675.8 L179.4 674.9 L178.8 674.3 L178.9 673.9 L179.5 673.5 L180.4 672.8 L181.4 671.7 L182.3 669.9 L183.2 667.7 L183.9 665.1 L184.6 662.6 L185.3 660.5 L186.1 659.4 L186.8 659.6 L187.5 661.2 L188 664 L188.2 667.7 L188 671.9 L187.3 675.8 L186.2 678.9 L184.9 680.7 L183.6 681.2 L182.7 680.5 L182.3 678.9 L182.5 677.1 L183.5 675.7 L185.1 675.3 L187 676.3 L189 678.8 L190.6 682.6 L191.7 687.3 L192.1 692.1 L191.8 696.4 L190.9 699.7 L189.8 701.6 L188.6 702.1 L187.7 701.3 L187.5 699.9 L187.8 698.3 L188.8 697.2 L190.1 697.1 L191.6 698 L192.8 700.2 L193.6 703.1 L193.9 706.5 L193.5 709.7 L192.7 712.4 L191.6 714.1 L190.6 714.7 L189.9 714.3 L189.9 713.1 L190.4 711.5 L191.6 709.8 L193.2 708.3 L194.9 707.2 L196.5 706.3 L197.6 705.6 L198.1 704.8 L197.8 703.7 L196.9 701.9 L195.4 699.5 L193.8 696.5 L192 693 L190.6 689.5 L189.5 686.3 L189 683.6 L188.9 681.7 L189.3 680.7 L190 680.5 L190.9 681 L191.8 682 L192.5 683.1 L193.1 684.1 L193.5 684.9 L193.5 685.5 L193.1 685.8 L192.3 685.9 L191.2 686 L189.8 686 L188.1 686 L186.3 686.1 L184.6 686.3 L183.1 686.4 L181.9 686.5 L181.2 686.6 L181.1 686.6 L181.5 686.5 L182.3 686.5 L183.3 686.4 L184.2 686.2 L184.8 686 L185 685.5 L184.7 684.6 L184.1 683.3 L183.2 681.6 L182.5 679.3 L182.1 676.8 L182.4 674.1 L183.6 671.5 L185.7 669.2 L188.4 667.4 L191.6 666.3 L194.7 665.6 L197.3 665.3 L199.2 665.2 L199.8 665 L199.2 664.5 L197.5 663.6 L194.8 662.3 L191.7 660.7 L188.3 659.1 L185.3 657.7 L182.9 656.8 L181.2 656.5 L180.3 656.7 L180.1 657.4 L180.4 658.2 L181 658.9 L181.7 659.1 L182.4 658.7 L183 657.7 L183.6 656.3 L184.3 654.7 L185 653.4 L185.8 652.8 L186.6 653.3 L187.5 654.9 L188.1 657.6 L188.4 660.9 L188.2 664.4 L187.6 667.5 L186.4 669.6 L185 670.2 L183.5 669.3 L182.1 667 L181.2 663.7 L180.7 659.9 L180.8 656.5 L181.4 653.9 L182.3 652.6 L183.1 652.7 L183.7 654.2 L183.9 656.6 L183.4 659.4 L182.3 662 L180.8 664 L179.1 665 L177.5 665.1 L176.2 664.4 L175.5 663.3 L175.4 662.5 L175.8 662.4 L176.6 663.5 L177.6 665.9 L178.5 669.7 L179.1 674.5 L179.3 680 L179.1 685.6 L178.7 690.9 L178.3 695.6 L178.2 699.3 L178.5 702.3 L179.5 704.5 L181.2 706.3 L183.4 707.9 L186 709.4 L188.8 710.9 L191.3 712.4 L193.4 713.7 L194.8 714.6 L195.6 714.7 L195.7 714 L195.3 712.3 L194.6 709.7 L193.8 706.3 L193.2 702.5 L192.7 698.5 L192.6 694.5 L192.8 690.9 L193.2 687.6 L193.8 684.8 L194.4 682.3 L195 680.1 L195.4 678 L195.6 675.9 L195.5 673.8 L194.9 671.7 L194 669.6 L192.5 667.5 L190.6 665.5 L188.3 663.7 L185.7 662.1 L182.9 660.7 L180.2 659.5 L177.7 658.5 L175.7 657.8 L174.2 657.5 L173.4 657.6 L173.2 658.2 L173.5 659.4 L174 661.1 L174.5 663.2 L174.7 665.6 L174.6 668 L174.1 670.2 L173.2 672.1 L172.3 673.5 L171.5 674.4 L171.2 674.9 L171.7 675.2 L173.2 675.6 L175.5 676.2 L178.7 677.2 L182.2 678.7 L185.8 680.5 L188.9 682.5 L191.1 684.4 L192.3 685.8 L192.2 686.6 L190.9 686.7 L188.8 686 L186.1 684.7 L183.3 683 L180.6 681.3 L178.5 679.9 L177 678.8 L176.2 678.1 L175.9 677.8 L176 677.6 L176.3 677.1 L176.6 676.1 L176.9 674.5 L177.1 672.3 L177.3 669.7 L177.5 667.1 L177.9 664.9 L178.5 663.6 L179.2 663.5 L179.9 664.8 L180.5 667.4 L180.9 670.9 L180.9 675 L180.5 678.9 L179.7 682.1 L178.7 684.2 L177.7 685 L176.8 684.6 L176.3 683.3 L176.3 681.7 L176.9 680.3 L178 679.6 L179.3 680.1 L180.8 681.8 L182 684.7 L182.9 688.2 L183.3 692 L183.2 695.3 L182.7 697.9 L182.1 699.3 L181.5 699.4 L181.2 698.6 L181.2 697.1 L181.7 695.4 L182.5 694 L183.4 693.3 L184.3 693.5 L185 694.5 L185.3 696.3 L185.1 698.4 L184.5 700.5 L183.7 702.2 L182.9 703.2 L182.3 703.5 L182.1 703.1 L182.5 702.2 L183.4 700.9 L184.8 699.6 L186.4 698.3 L188.1 697.4 L189.5 696.6 L190.5 695.9 L190.9 695.1 L190.8 694.1 L190.1 692.7 L189.1 690.8 L187.9 688.6 L186.7 686.1 L185.7 683.6 L185 681.2 L184.7 679.1 L184.8 677.5 L185.2 676.5 L185.9 675.9 L186.8 675.8 L187.8 676.1 L188.8 676.7 L189.8 677.4 L190.6 678.2 L191.2 679.1 L191.4 680 L191.1 680.8 L190.5 681.5 L189.4 682 L188 682.2 L186.4 682.2 L184.8 681.8 L183.5 681.1 L182.6 680.2 L182.3 679.2 L182.5 678.4 L183.3 677.8 L184.5 677.5 L185.8 677.6 L187 677.9 L187.8 678.2 L188 678.4 L187.7 678.2 L187 677.4 L186 676 L185.2 673.9 L184.8 671.4 L185.1 668.8 L186.3 666.2 L188.4 664.1 L191.2 662.7 L194.4 662 L197.6 662 L200.4 662.4 L202.3 663.1 L203.2 663.7 L202.9 663.9 L201.6 663.6 L199.4 662.8 L196.8 661.8 L194.1 660.6 L191.7 659.7 L189.8 659.2 L188.5 659.3 L187.9 660 L187.8 661.2 L188.1 662.5 L188.5 663.5 L189 664.1 L189.5 663.9 L189.9 663 L190.2 661.5 L190.7 659.7 L191.3 658.1 L192 657.2 L192.9 657.2 L193.8 658.3 L194.6 660.4 L195 663.3 L195.1 666.5 L194.7 669.4 L193.8 671.5 L192.5 672.4 L191.2 671.9 L189.8 670.1 L188.7 667.4 L187.9 664.2 L187.6 661.2 L187.6 659 L187.8 657.9 L188.1 658 L188.2 659.4 L188 661.6 L187.4 664.3 L186.5 667 L185.4 669.3 L184.2 670.8 L183.1 671.6 L182.3 671.8 L181.9 671.7 L181.9 671.8 L182.2 672.4 L182.7 673.9 L183.1 676.4 L183.4 679.9 L183.4 684.2 L183.1 689 L182.7 693.9 L182.2 698.6 L181.8 702.8 L181.9 706.3 L182.4 709.2 L183.5 711.4 L185.2 713.2 L187.3 714.7 L189.6 716 L191.8 717.1 L193.8 718.1 L195.3 718.7 L196.2 718.8 L196.6 718.4 L196.4 717.2 L195.8 715.3 L194.9 712.8 L194 709.6 L193.1 706.1 L192.4 702.3 L191.8 698.5 L191.5 694.7 L191.3 691.1 L191.3 687.7 L191.4 684.6 L191.5 681.7 L191.7 679.2 L191.7 676.9 L191.5 675 L191 673.4 L190.2 672.1 L188.8 671.1 L187 670.2 L184.8 669.3 L182.1 668.4 L179.3 667.4 L176.5 666.2 L174 665 L172 663.8 L170.7 662.9 L170 662.5 L170.1 662.7 L170.5 663.7 L171.2 665.4 L171.9 667.7 L172.2 670.3 L172 673 L171.4 675.3 L170.3 677 L169.2 678 L168.2 678.3 L167.7 678 L168 677.4 L169.2 676.7 L171.4 676.4 L174.3 676.5 L177.7 677.1 L181 678.2 L183.9 679.6 L186 680.9 L187 681.7 L186.8 682 L185.6 681.4 L183.6 680.1 L181.1 678.3 L178.4 676.1 L176 673.9 L174.1 672.1 L172.7 670.8 L171.9 670.1 L171.6 669.7 L171.5 669.6 L171.5 669.2 L171.6 668.4 L171.6 667 L171.6 665 L171.6 662.5 L171.8 659.9 L172.2 657.7 L172.8 656.3 L173.7 656.1 L174.6 657.2 L175.6 659.6 L176.4 663 L176.9 667 L177 671 L176.8 674.4 L176.3 676.8 L175.8 678 L175.3 678.1 L175 677.3 L175.1 676.1 L175.6 674.9 L176.4 674.3 L177.5 674.5 L178.6 675.8 L179.6 678 L180.3 680.8 L180.8 683.8 L181 686.6 L181.1 688.7 L181.1 689.8 L181.1 690 L181.4 689.4 L181.9 688.2 L182.7 686.9 L183.5 685.7 L184.3 685 L184.8 685 L185.1 685.6 L185 686.8 L184.5 688.3 L183.8 689.9 L183.1 691.2 L182.5 692.2 L182.3 692.7 L182.6 692.8 L183.4 692.5 L184.6 692 L186.2 691.4 L188 690.9 L189.6 690.5 L191 690.1 L191.9 689.8 L192.4 689.4 L192.3 688.8 L191.9 688 L191.1 686.9 L190.3 685.7 L189.4 684.3 L188.7 682.9 L188.3 681.5 L188 680.3 L188.1 679.2 L188.4 678.4 L189 677.7 L189.8 677.4 L190.7 677.3 L191.8 677.5 L192.9 678.1 L193.9 679.1 L194.8 680.3 L195.3 681.9 L195.3 683.5 L194.8 685 L193.8 686.2 L192.4 686.9 L190.8 687 L189.1 686.5 L187.6 685.4 L186.6 683.9 L186.3 682.4 L186.5 681 L187.4 680 L188.6 679.7 L189.9 679.9 L191.1 680.7 L191.8 681.6 L191.9 682.5 L191.4 683 L190.4 682.8 L189.2 681.8 L188.1 680 L187.5 677.7 L187.6 675.2 L188.6 672.7 L190.6 670.8 L193.3 669.6 L196.4 669.3 L199.5 669.7 L202.1 670.7 L204 671.9 L204.8 672.9 L204.5 673.6 L203.2 673.7 L201.2 673.2 L198.8 672.3 L196.3 671.3 L194.1 670.5 L192.4 670.2 L191.2 670.4 L190.5 671.2 L190.3 672.4 L190.3 673.8 L190.5 674.9 L190.6 675.4 L190.6 675.1 L190.6 673.9 L190.6 672.1 L190.7 669.9 L191 667.7 L191.5 666.1 L192.2 665.4 L192.9 665.7 L193.6 667.1 L194.1 669.3 L194.2 671.9 L193.8 674.3 L193.1 676.1 L191.9 676.9 L190.6 676.4 L189.3 674.8 L188 672.4 L187 669.5 L186.2 666.8 L185.7 664.6 L185.3 663.4 L184.9 663.2 L184.5 664.2 L183.9 666 L183.2 668.2 L182.4 670.6 L181.5 672.7 L180.8 674.4 L180.2 675.5 L179.9 676.2 L180 676.7 L180.2 677.3 L180.5 678.3 L180.9 679.9 L181 682.2 L180.9 685.3 L180.5 689 L179.9 693 L179.3 697.1 L178.8 701 L178.6 704.6 L178.9 707.6 L179.7 710.2 L181.2 712.2 L183.1 713.8 L185.3 715 L187.5 715.9 L189.7 716.4 L191.4 716.5 L192.7 716.3 L193.5 715.5 L193.7 714.2 L193.4 712.4 L192.9 710.1 L192.1 707.3 L191.3 704.1 L190.4 700.6 L189.6 696.8 L188.9 692.9 L188.4 688.8 L187.9 684.7 L187.6 680.7 L187.5 676.8 L187.5 673.2 L187.6 670 L187.7 667.4 L187.8 665.4 L187.6 664.2 L187.1 663.6 L186.2 663.4 L184.6 663.5 L182.6 663.6 L180.2 663.4 L177.5 662.9 L174.8 661.9 L172.5 660.5 L170.7 659 L169.6 657.7 L169.3 656.9 L169.7 656.9 L170.6 657.8 L171.6 659.6 L172.6 662.1 L173.2 665.1 L173.2 668.1 L172.7 670.7 L171.7 672.6 L170.6 673.5 L169.6 673.5 L169.2 672.7 L169.5 671.5 L170.9 670.2 L173.1 669.2 L176.1 668.8 L179.6 669 L182.9 669.7 L185.8 670.8 L187.9 671.9 L188.9 672.6 L188.8 672.6 L187.7 671.9 L185.8 670.4 L183.5 668.4 L181.1 666.1 L178.9 663.9 L177.1 662.1 L175.8 661 L175 660.5 L174.6 660.5 L174.5 660.8 L174.4 660.9 L174.2 660.7 L174.1 659.8 L173.9 658.3 L173.8 656.3 L173.9 654.2 L174.3 652.4 L175 651.3 L175.9 651.4 L177.1 652.7 L178.3 655.4 L179.4 659.1 L180.2 663.3 L180.8 667.7 L181 671.6 L180.9 674.6 L180.7 676.6 L180.5 677.4 L180.4 677.4 L180.5 676.9 L180.8 676.3 L181.2 676 L181.8 676.4 L182.4 677.6 L182.9 679.4 L183.3 681.8 L183.6 684.3 L183.9 686.7 L184.1 688.5 L184.4 689.7 L184.9 690.1 L185.6 689.8 L186.3 689.1 L187.2 688.3 L187.9 687.5 L188.3 687.1 L188.4 687.2 L188 687.7 L187.3 688.6 L186.3 689.8 L185.2 691.1 L184.2 692.4 L183.5 693.5 L183.4 694.3 L183.8 694.9 L184.7 695.3 L186.1 695.6 L187.7 695.8 L189.4 695.9 L190.9 696 L192 696 L192.7 695.9 L193 695.7 L192.8 695.3 L192.3 694.9 L191.6 694.3 L190.8 693.8 L190 693.2 L189.3 692.5 L188.7 691.9 L188.3 691.1 L188.1 690.3 L188 689.3 L188.2 688.3 L188.6 687.3 L189.3 686.5 L190.2 686.1 L191.2 686.2 L192.3 686.8 L193.2 688.1 L193.7 689.9 L193.8 692 L193.3 694 L192.1 695.6 L190.5 696.6 L188.5 696.6 L186.5 695.8 L184.8 694 L183.5 691.7 L182.9 689.3 L183 687 L183.8 685.4 L184.9 684.6 L186.2 684.6 L187.3 685.4 L187.9 686.6 L187.8 687.8 L187 688.6 L185.8 688.6 L184.3 687.7 L183 685.9 L182.2 683.5 L182.2 680.7 L183.2 678 L185.2 675.8 L188 674.4 L191.1 674 L194.3 674.5 L197 675.5 L198.9 676.8 L199.8 678 L199.6 678.7 L198.4 678.7 L196.5 678.1 L194.3 677 L192 675.8 L190 674.6 L188.4 674 L187.3 673.9 L186.7 674.4 L186.5 675.3 L186.4 676.4 L186.4 677.1 L186.4 677.2 L186.2 676.5 L186 674.8 L185.8 672.4 L185.8 669.5 L186 666.6 L186.4 664.1 L187.1 662.5 L187.9 662 L188.7 662.5 L189.3 663.9 L189.7 665.8 L189.6 667.7 L189.2 669.1 L188.5 669.6 L187.5 669.2 L186.4 667.8 L185.3 665.7 L184.3 663.1 L183.4 660.6 L182.6 658.6 L181.8 657.4 L181.1 657.2 L180.4 657.8 L179.6 659.3 L178.9 661.3 L178.3 663.5 L178 665.6 L177.9 667.4 L178.2 669 L178.7 670.3 L179.5 671.6 L180.3 672.9 L181.1 674.6 L181.5 676.7 L181.7 679.3 L181.5 682.3 L181 685.7 L180.3 689.4 L179.7 693 L179.3 696.6 L179.5 699.9 L180.2 702.9 L181.6 705.5 L183.6 707.6 L186.1 709.4 L188.7 710.6 L191.3 711.4 L193.6 711.7 L195.4 711.3 L196.8 710.4 L197.5 709 L197.8 707.1 L197.7 704.8 L197.4 702.2 L196.8 699.4 L196.1 696.4 L195.4 693.1 L194.6 689.7 L193.9 685.9 L193.1 681.9 L192.5 677.5 L191.9 673.1 L191.6 668.6 L191.5 664.4 L191.6 660.8 L191.8 658.1 L192.1 656.3 L192.3 655.7 L192.1 656 L191.5 657.1 L190.2 658.6 L188.4 660 L186 661 L183.3 661.3 L180.6 660.9 L178.3 659.8 L176.5 658.4 L175.5 657 L175.4 656.1 L176 656 L177.1 657 L178.4 659.2 L179.6 662.3 L180.3 665.9 L180.3 669.5 L179.7 672.7 L178.7 675 L177.4 676.2 L176.3 676.2 L175.8 675.2 L176.1 673.6 L177.4 671.9 L179.7 670.5 L182.7 669.6 L186.1 669.5 L189.4 670.1 L192.2 671.1 L194.2 672.1 L195 672.8 L194.7 672.8 L193.3 672 L191.2 670.5 L188.7 668.3 L186.1 666 L183.8 663.8 L181.8 662.2 L180.3 661.2 L179.3 661 L178.5 661.4 L178 662.1 L177.5 662.8 L176.9 663.1 L176.3 662.7 L175.7 661.7 L175.3 660.2 L175.1 658.5 L175.2 657.1 L175.7 656.3 L176.5 656.5 L177.5 658.1 L178.7 660.9 L179.9 664.7 L180.9 669.1 L181.6 673.7 L182.1 678 L182.3 681.4 L182.3 683.9 L182.2 685.4 L182.1 685.9 L182 685.9 L181.9 685.7 L181.7 685.6 L181.6 685.9 L181.4 686.6 L181.1 687.9 L180.9 689.5 L180.7 691.2 L180.6 692.8 L180.8 694 L181.3 694.7 L182.1 694.9 L183 694.7 L184 694.2 L184.9 693.5 L185.4 692.9 L185.5 692.5 L185 692.4 L183.9 692.6 L182.4 693 L180.6 693.7 L179 694.5 L177.6 695.3 L176.7 696.2 L176.6 697.1 L177.1 698 L178.2 698.9 L179.8 699.7 L181.6 700.3 L183.3 700.8 L184.7 701 L185.8 701 L186.3 700.7 L186.5 700.2 L186.2 699.6 L185.8 699 L185.1 698.6 L184.5 698.2 L183.8 698 L183.2 697.7 L182.6 697.4 L182 696.8 L181.6 695.7 L181.3 694.2 L181.1 692.4 L181.3 690.3 L181.8 688.3 L182.7 686.7 L183.8 685.7 L185 685.7 L186.1 686.6 L186.9 688.4 L187.2 690.7 L186.8 693.1 L185.7 695.1 L184 696.2 L181.9 696.1 L179.7 694.8 L177.7 692.3 L176.4 689.1 L175.7 685.5 L175.9 682.3 L176.8 679.8 L178.1 678.4 L179.6 678.1 L180.8 678.9 L181.5 680.3 L181.5 681.8 L180.8 683 L179.6 683.3 L178.2 682.6 L177 680.9 L176.4 678.3 L176.7 675.3 L178.1 672.4 L180.5 670.1 L183.7 668.6 L187.3 668.2 L190.9 668.7 L194 669.9 L196.3 671.4 L197.6 672.8 L197.7 673.6 L196.9 673.7 L195.3 673.1 L193.4 672 L191.5 670.6 L189.9 669.3 L188.6 668.4 L187.8 668.1 L187.4 668.5 L187.3 669.2 L187.3 670.1 L187.3 670.7 L187.2 670.6 L187 669.6 L186.8 667.7 L186.6 664.9 L186.6 661.6 L186.8 658.2 L187.3 655.3 L188.1 653.2 L189 652.1 L190 652 L190.9 653 L191.6 654.5 L192 656.1 L192.1 657.6 L191.9 658.4 L191.5 658.5 L190.9 657.8 L190.1 656.5 L189.2 654.9 L188.2 653.3 L187.1 652.1 L185.9 651.5 L184.7 651.6 L183.5 652.6 L182.4 654.2 L181.6 656.3 L181.2 658.7 L181.3 661.2 L181.9 663.8 L183 666.3 L184.5 668.7 L186.1 671.3 L187.6 674 L188.8 676.9 L189.4 680 L189.5 683.3 L189.1 686.9 L188.2 690.5 L187.3 694.2 L186.5 697.8 L186.1 701.4 L186.5 704.8 L187.6 708 L189.4 711 L191.9 713.7 L194.8 715.9 L197.7 717.6 L200.5 718.5 L202.9 718.6 L204.7 718 L205.9 716.5 L206.6 714.5 L206.7 712 L206.6 709.2 L206.1 706.4 L205.5 703.5 L204.8 700.7 L203.9 697.8 L202.9 694.7 L201.8 691.2 L200.6 687.1 L199.4 682.5 L198.2 677.5 L197.4 672.4 L196.8 667.5 L196.6 663.3 L196.7 660.2 L197 658.5 L197.2 658.3 L197.2 659.6 L196.5 661.9 L195.3 664.8 L193.3 667.6 L190.7 669.9 L187.7 671.2 L184.7 671.3 L182.1 670.4 L180.1 668.9 L178.9 667.2 L178.7 665.9 L179.2 665.5 L180.3 666.3 L181.6 668.5 L182.6 671.8 L183.1 675.7 L182.9 679.7 L182 683.2 L180.6 685.5 L179 686.6 L177.6 686.2 L176.8 684.7 L177 682.4 L178.2 679.8 L180.4 677.5 L183.4 675.9 L186.6 675 L189.8 674.9 L192.4 675.3 L194 675.8 L194.5 676 L193.8 675.6 L192.1 674.4 L189.6 672.4 L186.8 669.8 L183.9 667.1 L181.2 664.5 L178.9 662.6 L177.1 661.4 L175.7 661.1 L174.5 661.5 L173.5 662.2 L172.6 663 L171.6 663.5 L170.6 663.3 L169.6 662.5 L168.9 661.2 L168.4 659.6 L168.3 658.3 L168.6 657.5 L169.3 657.7 L170.3 659 L171.6 661.5 L172.9 665 L174.1 669.2 L175.3 673.5 L176.2 677.6 L177 681.1 L177.5 683.7 L177.8 685.5 L177.9 686.4 L177.8 686.7 L177.5 686.7 L176.9 686.6 L176.1 686.5 L175.1 686.6 L174.1 686.9 L173.2 687.3 L172.5 687.8 L172.3 688.1 L172.7 688.3 L173.6 688.2 L174.9 688 L176.5 687.6 L178 687.1 L179.3 686.6 L180 686.2 L180 685.9 L179.1 685.7 L177.5 685.6 L175.4 685.5 L173.1 685.6 L171 685.9 L169.5 686.3 L168.7 687.1 L168.8 688.2 L169.8 689.6 L171.5 691.1 L173.6 692.6 L175.8 694 L178 695 L179.7 695.6 L181 695.6 L181.8 695.2 L182.1 694.5 L182.1 693.7 L182 693 L181.8 692.6 L181.5 692.6 L181.3 692.9 L181 693.3 L180.6 693.5 L180.1 693.2 L179.7 692.1 L179.2 690.3 L179 687.6 L179 684.5 L179.5 681.3 L180.4 678.5 L181.7 676.6 L183.2 676 L184.8 676.7 L186 678.7 L186.6 681.6 L186.5 684.8 L185.5 687.5 L183.9 689.3 L181.8 689.7 L179.5 688.5 L177.6 685.8 L176.2 682.1 L175.6 677.9 L175.9 674.1 L177 671.2 L178.5 669.6 L180.2 669.4 L181.6 670.6 L182.4 672.7 L182.5 675.1 L181.8 677.1 L180.7 678.3 L179.4 678.3 L178.4 677.2 L178.1 675.1 L178.9 672.4 L180.7 669.9 L183.7 667.8 L187.4 666.7 L191.6 666.7 L195.6 667.7 L199.2 669.4 L201.7 671.5 L203.2 673.3 L203.6 674.6 L203 675.1 L201.6 674.8 L200 673.9 L198.3 672.6 L196.8 671.4 L195.6 670.6 L194.9 670.3 L194.4 670.6 L194.2 671.3 L194 672.1 L193.8 672.6 L193.4 672.4 L192.9 671.4 L192.3 669.3 L191.8 666.4 L191.5 663 L191.5 659.5 L191.7 656.3 L192.2 653.9 L192.9 652.4 L193.8 651.9 L194.6 652.4 L195.4 653.5 L196 655 L196.4 656.4 L196.6 657.6 L196.6 658.4 L196.2 658.7 L195.6 658.6 L194.6 658.3 L193.3 658.1 L191.6 658.1 L189.6 658.4 L187.4 659.3 L185.3 660.6 L183.5 662.3 L182.2 664.5 L181.6 666.9 L181.8 669.7 L182.9 672.7 L184.8 676 L187 679.6 L189.3 683.5 L191.4 687.5 L192.8 691.7 L193.5 695.8 L193.3 699.9 L192.3 703.7 L190.9 707.3 L189.4 710.7 L188.1 713.9 L187.5 717.1 L187.7 720.3 L189 723.4 L191.1 726.5 L193.9 729.3 L197 731.7 L200.2 733.4 L203 734.1 L205.3 733.7 L206.9 732.1 L207.9 729.6 L208.3 726.3 L208.2 722.6 L207.9 718.8 L207.3 715.2 L206.6 711.9 L205.7 708.8 L204.6 705.9 L203.3 702.8 L201.7 699.1 L199.9 694.7 L198.1 689.5 L196.3 683.5 L194.8 677.2 L193.8 671 L193.2 665.6 L193.1 661.6 L193.3 659.4 L193.6 659.2 L193.6 661 L193.1 664.1 L191.9 668.1 L190 672 L187.3 675.3 L184.3 677.3 L181.1 677.7 L178.4 676.8 L176.3 674.8 L175.1 672.3 L174.9 670.2 L175.5 669 L176.7 669.2 L177.9 670.8 L178.9 673.7 L179.3 677.3" fill="none" stroke="#16b0f4" stroke-width="1" stroke-opacity="0.8" stroke-linejoin="round"/></svg>
<svg width="1200" height="920" viewBox="0 0 1200 920"><defs><linearGradient id="wg" gradientUnits="userSpaceOnUse" x1="349" y1="0" x2="400" y2="0"><stop offset="0" stop-color="#031a26"/><stop offset="0.25" stop-color="#05405c"/><stop offset="1" stop-color="#0a92cc"/></linearGradient></defs><path d="M349.5 568.7V594.9M350.5 571.2V594.5M351.5 570V593.7M352.5 572.4V592.2M353.5 572.2V590.7M354.5 571.2V592.6M355.5 569.5V593.2M356.5 570V592.5M357.5 568.1V593.4M358.5 570.7V594.7M359.5 569.9V594.4M360.5 567V595.1M361.5 566.1V593.6M362.5 568.4V592.2M363.5 568.9V592.5M364.5 569V594.2M365.5 568.9V593.5M366.5 570V591.1M367.5 571V590.5M368.5 572.6V592.3M369.5 574.9V591.1M370.5 573.5V593M371.5 572.4V592.8M372.5 571.4V592.4M373.5 572.8V593.6M374.5 571.1V592.8M375.5 572.7V593M376.5 569.6V592.9M377.5 571V593.1M378.5 571.2V592.3M379.5 572.9V593.5M380.5 574.7V592.5M381.5 574.7V591.9M382.5 574.7V593.6M383.5 574.5V592.2M384.5 575.7V592.4M385.5 574.1V592.1M386.5 573.5V592M387.5 573V593M388.5 575.2V593.4M389.5 575.9V593M390.5 574.5V593.1M391.5 574.9V592.6M392.5 576.9V591.9M393.5 577.1V591.6M394.5 576.5V590.7M395.5 577V589.5M396.5 577V588.4M397.5 577.2V588.5M398.5 576.1V590.2M399.5 570.3V591.5M400.5 542.6V614.7M401.5 542.3V630.2M402.5 527.7V640.8M403.5 528.8V621.3M404.5 532.4V618.9M405.5 537.9V621.9M406.5 547.3V615.5M407.5 556.8V616.9M408.5 555.6V614.5M409.5 558.7V607.9M410.5 559.6V605.9M411.5 563.4V599.8M412.5 552.9V607.1M413.5 554.2V610.6M414.5 549.6V612.4M415.5 549.1V618M416.5 553.9V618M417.5 552.5V614.5M418.5 549.3V607.4M419.5 548.3V611.6M420.5 544.5V612.5M421.5 559.3V613.6M422.5 558.6V610M423.5 565.4V605.5M424.5 566.5V602.9M425.5 566.9V602.8M426.5 565.5V606M427.5 557.7V606.9M428.5 560.4V610.9M429.5 556.7V614.7M430.5 556.1V610.4M431.5 548.5V607.5M432.5 542V606.2M433.5 549.1V609.4M434.5 554.4V611.3M435.5 560.1V612.5M436.5 562.8V605.6M437.5 568.3V600M438.5 566.7V598.9M439.5 560.5V599.6M440.5 558.3V600.7M441.5 556.1V602.2M442.5 556.7V605.5M443.5 553.7V607.1M444.5 552.9V606.7M445.5 555.9V608.9M446.5 561.5V610.2M447.5 562.9V612.8M448.5 562.9V611.8M449.5 564.7V602.1M450.5 565.2V604.3M451.5 570V599.4M452.5 568.3V600.2M453.5 564.6V597.6M454.5 562.5V600.5M455.5 557.7V604.3M456.5 561.2V605.6M457.5 555.5V607.4M458.5 560.4V610.4M459.5 563V608.7M460.5 563V607.2M461.5 564V605.5M462.5 557.8V607.8M463.5 560.9V605.2M464.5 563.1V598.1M465.5 569.9V599.6M466.5 567.7V597M467.5 565.7V601.9M468.5 565.2V604.4M469.5 561.5V607.8M470.5 560.9V612.8M471.5 560V612.8M472.5 560.2V604.4M473.5 559.3V605.9M474.5 559.5V606.9M475.5 563.1V603.9M476.5 561.4V609M477.5 563.8V606.4M478.5 568V599.6M479.5 568.9V600.4M480.5 567.8V600.1M481.5 567.5V598.2M482.5 565.4V598.4M483.5 563.3V600.3M484.5 564.1V603.7M485.5 565.1V606.3M486.5 560.8V605.5M487.5 560.8V601.2M488.5 558.9V602.5M489.5 564.8V600.1M490.5 563.7V600.3M491.5 560.3V604.9M492.5 549.7V609M493.5 552.4V610.2M494.5 548V612M495.5 546.7V609.7M496.5 543.3V618.9M497.5 540V627.2M498.5 542.1V627.2M499.5 544.5V625.7M500.5 543.3V620.8M501.5 541V620.6M502.5 542.1V621.7M503.5 537.4V618.4M504.5 545.7V613.3M505.5 546.9V611.2M506.5 555.7V609.7M507.5 557.2V607.9M508.5 558.8V604.7M509.5 551.3V615.5M510.5 546.1V614M511.5 551.9V618.6M512.5 555.7V616.2M513.5 558V613.9M514.5 547.6V613.3M515.5 551.5V621.6M516.5 547.7V620.1M517.5 547.7V617M518.5 552V611.1M519.5 559.1V607.2M520.5 562V605.5M521.5 561.2V605.7M522.5 553.8V604.2M523.5 554.3V608.1M524.5 542.8V612.3M525.5 543.4V616.1M526.5 538.1V616.7M527.5 543.8V616M528.5 536.5V614.4M529.5 537.2V608.7M530.5 538.7V611.3M531.5 543.6V604.2M532.5 548V605.8M533.5 553.5V602.2M534.5 555.5V599M535.5 558.3V601.1M536.5 554.8V603.5M537.5 554.1V605.8M538.5 554.3V607.2M539.5 549.7V607.7M540.5 552.4V608.9M541.5 556.7V608M542.5 554.2V604.5M543.5 556.7V605.5M544.5 554V611.2M545.5 551.9V604.7M546.5 561.9V602.2M547.5 559.5V600.9M548.5 559.7V601.7M549.5 559.6V605.4M550.5 557.6V605.8M551.5 562.1V603.5M552.5 554.1V609.9M553.5 556.3V607.1M554.5 562.5V606M555.5 563V609.9M556.5 561V608.8M557.5 560.7V607.8M558.5 565.3V606.7M559.5 561.9V605.7M560.5 561.6V604.7M561.5 564.2V603.6M562.5 564.7V601.4M563.5 562.5V603.8M564.5 561.2V601.4M565.5 558.4V607.1M566.5 562.2V608.8M567.5 562.8V608.2M568.5 559.9V611.1M569.5 562.5V611.6M570.5 564V611.3M571.5 563.1V611.9M572.5 566.8V602.2M573.5 566.3V603.5M574.5 569.1V599M575.5 567.8V601.2M576.5 569.7V600.1M577.5 570.3V597.5M578.5 571.4V597.9M579.5 565.9V603.3M580.5 561.8V605.3M581.5 554.7V607.6M582.5 550.2V616.3M583.5 529.6V626.5M584.5 537V635.2M585.5 536V634.3M586.5 539.7V627.7M587.5 537.4V624.9M588.5 536.3V622M589.5 537.8V620.7M590.5 541.2V619.1M591.5 544.5V609.6M592.5 551.7V607.2M593.5 550.4V608.1M594.5 554.7V608.1M595.5 559.8V601.4M596.5 551.8V606.7M597.5 548.6V609.3M598.5 554.1V611.7M599.5 541.1V617.4M600.5 548.4V616.7M601.5 545.1V608.3M602.5 548V613.9M603.5 544.6V610.4M604.5 546.7V610.6M605.5 555.1V603.7M606.5 555V599.1M607.5 562V600M608.5 559.9V595.5M609.5 557.9V599.3M610.5 556.9V604.3M611.5 557.5V607.3M612.5 546.7V605M613.5 535.3V610.6M614.5 545.6V617.6M615.5 547.4V614.7M616.5 548.8V610.7M617.5 546V611.7M618.5 536.5V615.3M619.5 549.4V611.6M620.5 562.4V606.4M621.5 564.7V601.8M622.5 563V601.4M623.5 559.4V603.8M624.5 559.8V606.5M625.5 551.1V610.3M626.5 547.1V614.1M627.5 547.7V613.8M628.5 550.1V611.4M629.5 556.9V605.6M630.5 551.5V608.3M631.5 549.6V617.2M632.5 557.4V614.3M633.5 560.5V608.1M634.5 566.4V607.1M635.5 563.9V603M636.5 563.6V604.3M637.5 564.4V598.1M638.5 557.9V607.6M639.5 554.5V609.2M640.5 559.4V619.9M641.5 554.3V626.2M642.5 561.4V623.6M643.5 556.6V621M644.5 556.5V618.7M645.5 555.9V617.5M646.5 561.4V615.2M647.5 562V612.1M648.5 566V608.5M649.5 565.4V603.4M650.5 563.7V602.5M651.5 560.5V601.5M652.5 561.3V613.6M653.5 558.2V616.3M654.5 558.6V615.5M655.5 559.6V616.1M656.5 562.5V622.5M657.5 563.3V620.2M658.5 565V615.8M659.5 563.9V610.9M660.5 561.5V604.1M661.5 562.6V604.2M662.5 564.4V602.4M663.5 568.2V600.7M664.5 567.6V601.1M665.5 566.4V600.6M666.5 565.7V605.6M667.5 566.8V605.1M668.5 562.5V604.3M669.5 565.4V602.5M670.5 568.3V601.1M671.5 564V599.3M672.5 562.6V597.5M673.5 559.4V598.6M674.5 560.2V596.7M675.5 565.4V598.2M676.5 569.1V596.5M677.5 568.5V597.9M678.5 567.2V596.8M679.5 565.9V600.8M680.5 569.4V601.9M681.5 566.1V600M682.5 564.3V597.2M683.5 563V595.5M684.5 562.4V595.6M685.5 562.2V593.3M686.5 565.3V597.7M687.5 564.4V598.8M688.5 569.3V597.8M689.5 569.9V595.9M690.5 568.9V594.5M691.5 570.2V593.3M692.5 571.6V591.6M693.5 568.6V593.7M694.5 566V595.8M695.5 565.8V596M696.5 566.2V599.1M697.5 568.3V596.6M698.5 567.7V600M699.5 567.4V596.5M700.5 565.7V600.1M701.5 564.6V598.4M702.5 569.6V594.5M703.5 567.9V594.5M704.5 569.8V593.5M705.5 571V591.1M706.5 571.7V593.6M707.5 570.8V594.3M708.5 573.1V594.5M709.5 571.1V594.6M710.5 567.6V594.5M711.5 567.3V594.7M712.5 568.6V597.1M713.5 573.3V595.9M714.5 571.3V595.8M715.5 572.3V595M716.5 572.9V594.2M717.5 574.1V593.4M718.5 574.2V592.4M719.5 572.4V592.1M720.5 573.1V591.9M721.5 571.4V593.2M722.5 570.7V593.9M723.5 572.2V594.5M724.5 573V592.8M725.5 573.9V595.3M726.5 572.7V592.7M727.5 573.2V594M728.5 573.5V592.9M729.5 573.9V590.7M730.5 577V592.3M731.5 575.5V591.7M732.5 577.7V591M733.5 576.3V590.3M734.5 575.3V589.4M735.5 576.2V590.7M736.5 574V589.7M737.5 574.2V591.3M738.5 575.5V591.7M739.5 573.1V590.4M740.5 573.3V589.8M741.5 575.4V590.2M742.5 575.5V590.7M743.5 576.4V590.2" stroke="url(#wg)" stroke-width="1.05" stroke-opacity="0.5" fill="none"/><path d="M349.5 569.7V593.6M350.5 571.8V594M351.5 570.9V593M352.5 573.8V591.6M353.5 573.4V589.7M354.5 572.8V592.2M355.5 570.6V592.9M356.5 571.7V591M357.5 569.5V591.8M358.5 571.6V594.2M359.5 571.8V593.6M360.5 568.3V593.9M361.5 568.2V591.9M362.5 570.4V591.5M363.5 571.2V591.3M364.5 571.1V593.5M365.5 570.1V593.1M366.5 570.6V590.5M367.5 572V590.1M368.5 574V591.9M369.5 575.9V589.7M370.5 574.3V592.6M371.5 573.1V592.3M372.5 571.9V590.9M373.5 574V592.5M374.5 572.5V591.7M375.5 573.9V591.8M376.5 570.5V592.2M377.5 572.1V592.8M378.5 571.7V591.8M379.5 574.2V592.7M380.5 575.2V592M381.5 575.4V590.9M382.5 575.4V592.8M383.5 575.2V591.4M384.5 576.6V592.1M385.5 574.8V591.6M386.5 574.1V591.5M387.5 573.9V592.1M388.5 576V592.8M389.5 576.5V592.4M390.5 575.7V592.5M391.5 575.4V591.9M392.5 577.4V591.3M393.5 577.7V591M394.5 577.2V590.2M395.5 577.3V588.4M396.5 577.7V588M397.5 578V587.9M398.5 576.5V589.8M399.5 572.1V591.1M400.5 549.5V609.9M401.5 544.5V624.2M402.5 530.8V636.2M403.5 534.7V617.5M404.5 536V613.6M405.5 542.1V619.6M406.5 549.3V610.8M407.5 560.2V615.6M408.5 556.7V612.2M409.5 561.5V606.9M410.5 560.6V604.9M411.5 564.7V597.9M412.5 555.3V605.1M413.5 556.2V608.4M414.5 551.2V609.8M415.5 550.6V616M416.5 558.2V614.5M417.5 555.5V611.5M418.5 552.5V605.5M419.5 550.1V608.9M420.5 548.9V609.5M421.5 561.4V610.3M422.5 559.8V605.8M423.5 567.9V603M424.5 567.1V601.7M425.5 567.8V602M426.5 566.5V604.7M427.5 558.9V603.3M428.5 564.1V609.6M429.5 560.3V612.9M430.5 557.6V607.8M431.5 551.1V605.7M432.5 544.8V604.1M433.5 551.8V607.1M434.5 555.7V608.8M435.5 563.2V610.9M436.5 565V603M437.5 569.2V599.1M438.5 568.5V597M439.5 561.8V598.4M440.5 560.4V599.6M441.5 558.2V599.4M442.5 558.5V604.6M443.5 555.6V605.2M444.5 554.6V602.8M445.5 558.6V605.3M446.5 563.9V606.9M447.5 565.8V609.7M448.5 564.3V609.9M449.5 567.4V600.4M450.5 566.3V602.8M451.5 571.2V596.8M452.5 569.6V599.4M453.5 565.4V596.3M454.5 563.5V599M455.5 559.3V602M456.5 564.1V604.4M457.5 557V603.8M458.5 564.3V609.2M459.5 564.7V605.4M460.5 564.6V603.8M461.5 566.5V604.2M462.5 561V605.5M463.5 563.5V604M464.5 564.2V597.1M465.5 571.2V598.7M466.5 569.5V595.7M467.5 566.5V600.8M468.5 567.7V602.5M469.5 563.1V606.7M470.5 563.8V610.8M471.5 562V609.7M472.5 561.4V602.6M473.5 560.4V604.8M474.5 560.9V605.5M475.5 565.6V602.5M476.5 563.5V607.5M477.5 565V605.4M478.5 570.5V597.9M479.5 570.6V597.8M480.5 570V598.7M481.5 568.2V596.1M482.5 567.3V597M483.5 564.2V598.6M484.5 566.2V601.3M485.5 567.9V605.1M486.5 561.7V604.4M487.5 562.6V598.3M488.5 562.5V601.6M489.5 567.5V598.6M490.5 566.7V598.4M491.5 561.7V603.8M492.5 551.1V607.4M493.5 555.4V607M494.5 550.9V609.5M495.5 548.8V607.1M496.5 547.2V616.4M497.5 541.6V624.7M498.5 544.8V624.6M499.5 546.3V623.5M500.5 545.1V619.1M501.5 546V618.8M502.5 543.9V617.7M503.5 540.3V616.9M504.5 547.9V611.9M505.5 552V609.1M506.5 558.1V607.9M507.5 559.7V606.5M508.5 561.7V603.6M509.5 552.5V614.1M510.5 547.6V611.9M511.5 557V614.1M512.5 558.3V614.9M513.5 560.4V612.5M514.5 549.3V610.2M515.5 556.2V619.5M516.5 553.5V616.9M517.5 551.5V614.7M518.5 554.3V609.5M519.5 561.7V605.8M520.5 564.2V604.7M521.5 562.9V604.7M522.5 558V601.9M523.5 557.1V605.8M524.5 544.5V610.8M525.5 545.6V614.6M526.5 540.7V615.4M527.5 546.7V614.7M528.5 539.5V610.3M529.5 542.1V606.8M530.5 541.3V610.1M531.5 545.1V600.7M532.5 549.5V603M533.5 557.5V599.4M534.5 558V598.1M535.5 562.1V599.8M536.5 558.4V602.5M537.5 555.5V603.4M538.5 557.9V604.6M539.5 551.8V605.8M540.5 554.4V607.8M541.5 561.1V604M542.5 557.3V602.2M543.5 561.3V602.9M544.5 558.8V608.2M545.5 553.9V603.3M546.5 564.3V600.7M547.5 560.4V599.1M548.5 561.9V600.1M549.5 560.7V604.3M550.5 558.9V602.1M551.5 564.4V602M552.5 556.6V607.1M553.5 558.3V604.4M554.5 564.4V604.2M555.5 564.4V608.8M556.5 562.1V607.4M557.5 564.4V604.8M558.5 566.8V605.8M559.5 562.9V603.7M560.5 562.5V602.9M561.5 565.1V602.2M562.5 567.4V598.9M563.5 564V602.8M564.5 563.6V599.8M565.5 559.8V606.2M566.5 565.1V605.6M567.5 564.9V605.6M568.5 561.2V609.5M569.5 564.3V609M570.5 567.2V609.6M571.5 564.8V608M572.5 568.9V601.1M573.5 568V601.9M574.5 569.9V596.8M575.5 569.4V598.7M576.5 571.8V599.1M577.5 571.3V596.3M578.5 572.5V596.3M579.5 567V602.3M580.5 562.8V604.3M581.5 558.6V604.6M582.5 553.1V615M583.5 531.9V623.5M584.5 540.3V633.1M585.5 538.4V625.3M586.5 542.5V625.4M587.5 540.7V622.5M588.5 544.3V620.5M589.5 541.7V618.9M590.5 543.5V617.3M591.5 546.4V607.5M592.5 557.3V605M593.5 553.5V604.4M594.5 557V607.1M595.5 562.3V599.5M596.5 555.5V605.1M597.5 553.5V607.3M598.5 556.4V609.3M599.5 543.7V616M600.5 550.2V615.1M601.5 550.2V605.1M602.5 552.1V612.6M603.5 546.6V607.5M604.5 549.7V608.3M605.5 559.8V600.4M606.5 557V598M607.5 563.7V597.9M608.5 561.7V594.1M609.5 561.5V597.4M610.5 558.3V602.3M611.5 559V603.6M612.5 549.7V603.1M613.5 539.8V606.3M614.5 548.8V614.3M615.5 551.2V611.6M616.5 551.2V609.3M617.5 548.1V610.3M618.5 540.1V614.1M619.5 554V607.4M620.5 565.4V605.1M621.5 566.8V600M622.5 564.6V600.4M623.5 560.4V603M624.5 561.8V605.2M625.5 554.8V607.2M626.5 551.3V612.7M627.5 549.2V610.2M628.5 551.5V610.3M629.5 559.4V603.3M630.5 553.7V605.7M631.5 551V612M632.5 558.8V612.1M633.5 562.8V605.9M634.5 568.6V605.4M635.5 565V600.6M636.5 566.3V602.3M637.5 565.8V597.3M638.5 559.5V605.6M639.5 556.3V607.5M640.5 561.4V617.6M641.5 555.5V620.5M642.5 563.6V622M643.5 558.1V618.4M644.5 558.2V617M645.5 559.3V615.3M646.5 562.9V611M647.5 564.2V608.8M648.5 568V607.4M649.5 566.7V600.5M650.5 566.5V601.3M651.5 562.6V600M652.5 564.2V610.9M653.5 559.4V613.1M654.5 561V611.8M655.5 561.2V614.1M656.5 564.3V616.9M657.5 566.8V615.2M658.5 565.9V613.2M659.5 566V608.3M660.5 563.1V602.2M661.5 563.5V601.6M662.5 565.5V600.7M663.5 568.9V599.9M664.5 568.5V600.1M665.5 568.8V598.5M666.5 566.9V604.7M667.5 569.6V604M668.5 564.9V603M669.5 566.7V601.1M670.5 570.6V598.3M671.5 564.9V598.1M672.5 564.3V595.3M673.5 560.7V597M674.5 562.5V595.2M675.5 567.9V597.1M676.5 570.4V595.9M677.5 569.4V596M678.5 569.3V594.8M679.5 567.6V600.1M680.5 570.4V600.7M681.5 568.4V599M682.5 566.4V596.2M683.5 564V594.8M684.5 563.3V595.1M685.5 564.5V592.3M686.5 566.8V597.2M687.5 565.4V598.1M688.5 571.6V597.1M689.5 571.6V594.9M690.5 569.9V593.6M691.5 570.9V592.5M692.5 573V590.9M693.5 569.2V593.3M694.5 568.3V594.9M695.5 567.7V594.8M696.5 567.6V598.5M697.5 568.9V594.8M698.5 569.5V599.2M699.5 568.3V594.8M700.5 567.9V598.9M701.5 565.3V596.5M702.5 570.4V592.9M703.5 569V593.6M704.5 570.5V591.9M705.5 571.5V590.6M706.5 573.3V592.6M707.5 572.3V593.8M708.5 573.8V594M709.5 572.9V593.5M710.5 569.2V594M711.5 568.4V593.5M712.5 569.6V595.8M713.5 574.1V594.9M714.5 571.8V594.9M715.5 572.9V594.3M716.5 574.3V593.4M717.5 574.5V592.3M718.5 575.4V591.8M719.5 573.1V591.5M720.5 573.7V590.7M721.5 572.6V592.3M722.5 571.4V592.8M723.5 574.1V593.8M724.5 573.6V591.3M725.5 575.1V594.7M726.5 573.5V591.7M727.5 573.7V593.3M728.5 574.3V592.2M729.5 574.3V589.9M730.5 577.4V591.6M731.5 576V591.2M732.5 578.3V590.5M733.5 577V589.6M734.5 575.9V588.5M735.5 576.8V590.4M736.5 574.5V588.6M737.5 575.1V591M738.5 576.2V591.1M739.5 573.7V589.4M740.5 573.7V589.2M741.5 576V589.8M742.5 576.6V590.4M743.5 576.8V589.7" stroke="url(#wg)" stroke-width="1.05" fill="none"/><path d="M349.5 758.4V781.3M350.5 759.7V779.6M351.5 759.3V780.5M352.5 757.5V782.2M353.5 757V782.2M354.5 758V781.5M355.5 758.3V780.9M356.5 756.4V780.3M357.5 756.2V777.7M358.5 756.7V777.5M359.5 759.8V778.1M360.5 758.1V777.6M361.5 758.8V776M362.5 761.2V776M363.5 760V776.8M364.5 761.1V776.6M365.5 759.7V777.5M366.5 759V777.6M367.5 761.1V777.8M368.5 760V778.9M369.5 761.3V778.3M370.5 759.7V779M371.5 760.1V776.4M372.5 760.8V777.9M373.5 761.6V775M374.5 762.4V776.1M375.5 760.8V774.9M376.5 760V774.2M377.5 761.1V775.8M378.5 760.9V775.5M379.5 759.7V776.1M380.5 761.6V776.7M381.5 760.6V777.3M382.5 760.8V778.4M383.5 762.6V777.4M384.5 761.2V778.1M385.5 761.4V776.9M386.5 762.4V776.7M387.5 761.7V777M388.5 761.9V775.1M389.5 762V775.8M390.5 762.2V774.8M391.5 762.1V775.3M392.5 761.7V775.5M393.5 763.1V775.6M394.5 761V776.7M395.5 761.3V777.2M396.5 761.6V777.8M397.5 761.4V777.3M398.5 761.1V778.1M399.5 761.3V776.5M400.5 736.1V804.9M401.5 734.5V806.4M402.5 741.5V802.4M403.5 738.6V792.1M404.5 733V802.3M405.5 727.2V806.8M406.5 725.3V808.2M407.5 725.3V806.4M408.5 726.5V804.7M409.5 742.3V798M410.5 742.4V808.9M411.5 733.5V808.2M412.5 731.9V803.2M413.5 737.6V801.2M414.5 733.1V799.2M415.5 737.1V797.1M416.5 742.2V793.5M417.5 745.9V789.5M418.5 743.2V789.8M419.5 743.9V794.2M420.5 742.6V799.4M421.5 735.1V800.2M422.5 736.3V809M423.5 735.1V804.1M424.5 743.5V799.1M425.5 738.4V793.2M426.5 738.7V793.2M427.5 743.7V793.8M428.5 743.2V791.3M429.5 746.6V787.4M430.5 749.5V787.9M431.5 748.7V786.8M432.5 743.2V785.8M433.5 746.3V790.3M434.5 747.3V794M435.5 748V790.6M436.5 745.3V797.6M437.5 741.8V796.3M438.5 733.8V792.1M439.5 738.6V793.6M440.5 739V792.3M441.5 747.5V790.3M442.5 745.5V786.5M443.5 747.5V783.2M444.5 750V779.8M445.5 751.2V781.3M446.5 754.1V782.9M447.5 753.2V786M448.5 748.4V786.4M449.5 746.1V788.3M450.5 745.5V785.4M451.5 743.3V786.8M452.5 742.8V787.5M453.5 749.1V789.1M454.5 748.8V790.5M455.5 751.7V790.7M456.5 756.2V787.2M457.5 757.4V783.3M458.5 756.2V781.3M459.5 757.6V782.8M460.5 755V783.6M461.5 754.4V789.9M462.5 751.2V791.5M463.5 749.4V795.1M464.5 747.5V797.8M465.5 748.3V794.4M466.5 751.7V795.6M467.5 750.6V797.9M468.5 750.1V798.7M469.5 750.1V788.8M470.5 749.9V791.4M471.5 751.7V788.1M472.5 754V783.5M473.5 755.3V779M474.5 754V780.7M475.5 751.1V787.5M476.5 754.2V790.1M477.5 749.7V792.2M478.5 749V794.3M479.5 747V791.9M480.5 744V791.2M481.5 746.2V787.5M482.5 745.6V786.9M483.5 749.2V785.1M484.5 751.3V782.8M485.5 753.3V782M486.5 758V781M487.5 756.5V781M488.5 753.1V780.4M489.5 749.7V786.2M490.5 740.9V796M491.5 728.6V808.2M492.5 702.9V817.5M493.5 715.3V820.2M494.5 715.5V817.6M495.5 709.9V805.9M496.5 722V804.5M497.5 716.9V805.3M498.5 726.6V807M499.5 728.9V809.8M500.5 738.8V810.2M501.5 737.7V806.1M502.5 731.2V801.9M503.5 726.7V805.9M504.5 723.6V800.3M505.5 727.6V814.2M506.5 715.6V810.6M507.5 716.5V808.6M508.5 721.7V804.3M509.5 727.3V801.8M510.5 739.6V797M511.5 744.1V801.6M512.5 741.6V802M513.5 743.3V804.7M514.5 739.6V794.2M515.5 736.3V794.3M516.5 731.1V796M517.5 729.6V798M518.5 730.6V797M519.5 730.4V797.1M520.5 735.3V797M521.5 731V798.3M522.5 731.7V799.5M523.5 731V803M524.5 734.9V800.7M525.5 732.8V804.3M526.5 738V803.3M527.5 748.9V799.7M528.5 744.2V791.4M529.5 733.8V798.6M530.5 729.3V800.1M531.5 723.3V803.8M532.5 721.1V801.6M533.5 724.2V806.6M534.5 732.5V808.2M535.5 738.4V810M536.5 742.1V808M537.5 737.4V799.7M538.5 738V796.7M539.5 738.9V793.9M540.5 739.9V788.7M541.5 737.8V786.6M542.5 735.7V785.9M543.5 733.7V787.1M544.5 737.6V787.9M545.5 741.9V789.6M546.5 726.9V800.5M547.5 730.7V798.9M548.5 734.5V796.7M549.5 735.3V795.2M550.5 736.1V791.4M551.5 741.7V797M552.5 739.6V805.1M553.5 743.3V799.5M554.5 750.5V790.4M555.5 753.3V786.8M556.5 748.3V786.7M557.5 746.8V789.8M558.5 747V786.8M559.5 746.7V792.5M560.5 741.6V793.3M561.5 741.8V794M562.5 741.2V792.4M563.5 745.9V789.4M564.5 740.6V789.3M565.5 746.2V788.1M566.5 744V787.5M567.5 750.4V785M568.5 752.6V783.2M569.5 751V780.7M570.5 753V783.5M571.5 754.4V782.5M572.5 749.3V786.8M573.5 746.4V793.7M574.5 746.8V798.8M575.5 751.4V794.6M576.5 747.4V788.5M577.5 749V789.7M578.5 749.8V791.7M579.5 750.5V793.3M580.5 746.1V795.6M581.5 736V805.4M582.5 722.2V809.3M583.5 722.1V818.3M584.5 723V822.4M585.5 730.6V820.3M586.5 732.4V804.7M587.5 741.4V792.5M588.5 741V803M589.5 724.3V804M590.5 720.2V800.5M591.5 713.3V806.7M592.5 717.9V813.1M593.5 737V818M594.5 723.6V821.1M595.5 714.3V810.6M596.5 724.6V807.7M597.5 726.1V804.9M598.5 728.1V800.1M599.5 731.3V795.7M600.5 734.4V791.4M601.5 747.1V792.3M602.5 737.7V792.9M603.5 739.7V792.1M604.5 730.9V796.5M605.5 725.8V799.4M606.5 736.2V800.2M607.5 727.7V796M608.5 728.2V807.3M609.5 734V809.4M610.5 733.7V809M611.5 732.5V803.8M612.5 740.7V796.7M613.5 743.7V790.7M614.5 743V793.8M615.5 745.1V789.6M616.5 745.4V792.9M617.5 743.2V795M618.5 731.9V794.4M619.5 732.4V798.1M620.5 731.2V796.5M621.5 726.7V797.2M622.5 735.1V794.9M623.5 727.1V797.3M624.5 733.1V798.9M625.5 736.1V800.5M626.5 732.9V798.1M627.5 730.3V791.9M628.5 734.2V785.6M629.5 738.8V788.9M630.5 748V794M631.5 750.1V799.8M632.5 749V800.2M633.5 742.9V800.7M634.5 737.3V804M635.5 735V796.7M636.5 739.2V805.4M637.5 743.4V796.9M638.5 743.8V794.3M639.5 742.1V792.7M640.5 742.2V797.4M641.5 742V798M642.5 744.7V796.7M643.5 748.9V791.4M644.5 748.7V794.6M645.5 741.8V790.7M646.5 741.7V800.4M647.5 743.5V806.4M648.5 743.9V800.5M649.5 745.3V800.8M650.5 750.8V794.6M651.5 748.4V797.4M652.5 748.9V803.3M653.5 749.3V805.8M654.5 745.7V799.8M655.5 743.7V788.7M656.5 750.2V787.8M657.5 751.3V789.3M658.5 754.3V788.8M659.5 751.6V789.8M660.5 747.1V790.6M661.5 745.4V788.7M662.5 746.5V794.8M663.5 747.6V795.4M664.5 748.6V791.6M665.5 753.5V790.1M666.5 751.5V792M667.5 752.5V787.9M668.5 754.6V784.3M669.5 756.8V786.2M670.5 758.8V784.1M671.5 756V787.2M672.5 753.9V787M673.5 751.8V787.2M674.5 750.8V790.7M675.5 751.9V791.9M676.5 755.2V790.4M677.5 755.1V788.7M678.5 755.8V785.5M679.5 756.4V782.4M680.5 752.4V784.3M681.5 751.9V783.7M682.5 752.5V783M683.5 756.8V783.5M684.5 758.6V781.3M685.5 758.6V780.7M686.5 758V781.5M687.5 756.4V782.4M688.5 754.4V781.5M689.5 752.7V783.8M690.5 751V783.7M691.5 751.3V784.8M692.5 753.6V782.8M693.5 756.9V782.3M694.5 757.9V784M695.5 757.7V781.9M696.5 757.6V779.5M697.5 757.5V779M698.5 757V779.4M699.5 756V779.4M700.5 755V779M701.5 753.9V781.1M702.5 754.7V781.1M703.5 757.2V780.8M704.5 759V778.2M705.5 756.8V778.8M706.5 755.1V777.6M707.5 753.8V776.1M708.5 757.1V776.2M709.5 757.4V776.7M710.5 759.5V775.9M711.5 761V776.4M712.5 760.8V777M713.5 759.7V775.9M714.5 759.6V778.1M715.5 758.9V778.4M716.5 758.7V778.9M717.5 758.7V778.4M718.5 758.2V776.7M719.5 758V779.4M720.5 759.9V777.4M721.5 758.9V778.3M722.5 761.2V777.1M723.5 761.5V775.6M724.5 762.6V775.5M725.5 761.4V775.4M726.5 761.1V775.9M727.5 762.3V776.4M728.5 761.4V776.9M729.5 760.9V775.9M730.5 760.7V777.8M731.5 760.9V777.4M732.5 762V777.1M733.5 761.3V775.8M734.5 762.3V776.5M735.5 762.7V775.8M736.5 762.6V776.5M737.5 762.5V776.5M738.5 762.8V776M739.5 763.1V776.1M740.5 763.4V775.9M741.5 762.6V775.6M742.5 763.1V775.4M743.5 762.2V774.9" stroke="url(#wg)" stroke-width="1.05" stroke-opacity="0.5" fill="none"/><path d="M349.5 759.8V779.3M350.5 760.2V778.4M351.5 761V779.8M352.5 758.7V781.3M353.5 757.5V781.3M354.5 759.6V780.9M355.5 758.8V780.3M356.5 757.2V779.6M357.5 757.2V776.4M358.5 757.5V776M359.5 760.7V777.6M360.5 758.7V777.2M361.5 759.2V775.4M362.5 761.9V775.3M363.5 761.5V776.5M364.5 761.5V775.5M365.5 760.1V777.1M366.5 759.6V776.3M367.5 761.9V777M368.5 760.5V777.5M369.5 761.7V776.8M370.5 760.2V778.1M371.5 760.9V775.7M372.5 761.2V777.4M373.5 762.1V774.7M374.5 763.1V775.6M375.5 761.6V774.3M376.5 760.4V773.6M377.5 762.3V775.5M378.5 761.4V774.9M379.5 760.2V775.3M380.5 763V775.9M381.5 761.4V776.6M382.5 761.5V778M383.5 763.4V776.7M384.5 761.5V777.4M385.5 762.2V775.9M386.5 763V775.7M387.5 762.3V776M388.5 762.4V774.3M389.5 762.3V775M390.5 763V773.9M391.5 762.7V774.5M392.5 762.4V774.6M393.5 763.8V774.8M394.5 761.5V775.9M395.5 762.4V776.7M396.5 762.6V777M397.5 762.3V776.2M398.5 761.4V777.6M399.5 761.8V776.2M400.5 737.7V802.9M401.5 736.7V804.8M402.5 744.5V799M403.5 739.8V789.7M404.5 734.9V798.7M405.5 731.3V805.3M406.5 730.1V804.7M407.5 731.8V802.3M408.5 730.6V802.9M409.5 745.9V795M410.5 744.1V807.3M411.5 737.7V806.2M412.5 734.4V800.7M413.5 743.2V798M414.5 738.6V797M415.5 740.6V794.7M416.5 743.6V790.7M417.5 748.6V787.9M418.5 744.2V786.8M419.5 746V792.8M420.5 746.3V797M421.5 739.6V798.4M422.5 740.1V805.9M423.5 737.8V801.1M424.5 744.8V796.9M425.5 742.1V790.2M426.5 739.9V790.3M427.5 746.4V790.1M428.5 745.8V789.9M429.5 747.6V784.6M430.5 751.1V785.8M431.5 751.1V785.9M432.5 744.8V784.4M433.5 748.1V789.4M434.5 748.4V790.8M435.5 751.2V789.3M436.5 748.5V795.8M437.5 744.1V794.9M438.5 735.6V790.6M439.5 740.3V792.7M440.5 740.3V791.4M441.5 749.9V789.2M442.5 749.1V785M443.5 748.4V781.5M444.5 752V778.4M445.5 752.4V779.7M446.5 755.2V782.2M447.5 755.3V785M448.5 749.3V785.3M449.5 749.4V787M450.5 746.5V783.2M451.5 744.3V785.8M452.5 744.5V786.7M453.5 751.6V788.1M454.5 750.2V788.8M455.5 753.5V789.6M456.5 758.2V785.4M457.5 758.9V782M458.5 756.8V780.8M459.5 759.3V782.2M460.5 756.6V782.1M461.5 755.3V788.9M462.5 753V790.2M463.5 750.5V793.2M464.5 748.5V794.1M465.5 750.3V790.8M466.5 752.7V791.8M467.5 752.1V796M468.5 751.3V797.5M469.5 751.6V786.9M470.5 752.2V789.7M471.5 752.6V786.8M472.5 756.3V782.9M473.5 755.9V778.5M474.5 755.6V779.5M475.5 752V786.8M476.5 755.5V789.3M477.5 751V791.3M478.5 749.9V793.3M479.5 748.3V789.5M480.5 745.1V789.3M481.5 750V786.2M482.5 746.5V785M483.5 751.2V782.8M484.5 752.7V781.9M485.5 754.1V780.9M486.5 758.8V780.4M487.5 757.3V780.4M488.5 754.2V780M489.5 750.9V785.3M490.5 744V793.8M491.5 734.6V803.8M492.5 710.5V809.5M493.5 719.7V813M494.5 718.1V815.2M495.5 714.1V803.9M496.5 724.4V802.7M497.5 719.5V801.9M498.5 730.7V804.5M499.5 732.4V808.2M500.5 742.2V808.4M501.5 742.6V801.7M502.5 733V799.2M503.5 731.6V801.6M504.5 728.7V798.2M505.5 729.9V809.2M506.5 717.7V804.7M507.5 720.3V806.1M508.5 727.8V801.9M509.5 731.2V799.5M510.5 742.7V795.2M511.5 745.5V799.6M512.5 742.9V799.6M513.5 746.8V801.6M514.5 742.2V793M515.5 738.4V792M516.5 733.9V795M517.5 733.1V793.4M518.5 735.9V793.1M519.5 733.8V793.7M520.5 738V795.5M521.5 732.7V795.6M522.5 737.6V797.3M523.5 736.2V801.5M524.5 739.9V795.7M525.5 735.5V800.5M526.5 743.4V801M527.5 750.6V798.5M528.5 748V788.5M529.5 737.4V797.3M530.5 735.3V798.1M531.5 727.1V801.3M532.5 723.8V799.2M533.5 726.1V801.3M534.5 736.2V804.3M535.5 741.1V806.7M536.5 743.6V806M537.5 739.5V797.7M538.5 741.9V793.1M539.5 740.2V790.7M540.5 742.4V785.5M541.5 739.9V784.8M542.5 737.2V785.1M543.5 735.5V784.7M544.5 742.2V785.4M545.5 745.6V786M546.5 728.8V799M547.5 734.5V795.3M548.5 736V794.4M549.5 736.9V792M550.5 740.4V790M551.5 744.1V795.3M552.5 743.3V801.7M553.5 745.8V797.1M554.5 752.1V788.6M555.5 754.2V785.2M556.5 749.3V785.3M557.5 747.8V787.7M558.5 748.1V785M559.5 749.9V791.6M560.5 742.7V791.6M561.5 743.6V793M562.5 742.7V790.7M563.5 748.7V788.3M564.5 743.2V786.9M565.5 749.3V787.1M566.5 745V784.7M567.5 752.3V782.2M568.5 753.7V781.1M569.5 753V779.8M570.5 754.5V782.5M571.5 755.4V781.9M572.5 750.1V785M573.5 747.8V792.8M574.5 748.4V797.3M575.5 752.8V793.6M576.5 749V785.8M577.5 750V787.2M578.5 750.7V790.6M579.5 752.3V790.2M580.5 747.7V792.7M581.5 739.6V803.6M582.5 724V804.9M583.5 724.5V812.8M584.5 724.9V820.1M585.5 733.7V814.2M586.5 736V799.6M587.5 744V790.7M588.5 744.2V801.5M589.5 730.7V801.4M590.5 723.2V797.6M591.5 717V803M592.5 720V811.2M593.5 740V814.4M594.5 730.3V817.4M595.5 718.1V807.4M596.5 731.9V805.3M597.5 728.3V803.5M598.5 729.7V798.8M599.5 736.1V794.7M600.5 738.7V789.8M601.5 748.4V791.2M602.5 739.1V791.9M603.5 741.5V789.3M604.5 736.5V795.2M605.5 729.3V798.2M606.5 738.6V798.2M607.5 730.3V794.2M608.5 731.8V805.6M609.5 736.2V807.1M610.5 737.8V804.3M611.5 734.4V801.3M612.5 744.6V794.2M613.5 745.9V789.4M614.5 744.9V792.1M615.5 748.7V788.4M616.5 746.8V790.8M617.5 744.6V791M618.5 735.7V792.5M619.5 734.4V796.7M620.5 736.9V795.1M621.5 730.1V795.6M622.5 737.4V792.5M623.5 729.8V796.2M624.5 734.8V794.8M625.5 740.2V799M626.5 738.2V796.8M627.5 734.4V790.2M628.5 737.6V784.6M629.5 741.9V787.3M630.5 749.4V792.8M631.5 752.3V796.1M632.5 750.6V796.3M633.5 744.7V797.2M634.5 738.9V801.9M635.5 736.6V794.5M636.5 740.5V801.1M637.5 744.7V793.7M638.5 745V791.9M639.5 743.4V789.8M640.5 746.1V793.7M641.5 744V796.3M642.5 747.4V795.1M643.5 751.5V790.4M644.5 752V792.5M645.5 744.8V788.7M646.5 745.4V796.9M647.5 746.3V805M648.5 747.7V798.8M649.5 746.6V798.7M650.5 752.4V790.7M651.5 750.9V795.5M652.5 750.4V802M653.5 751.3V802.9M654.5 748.5V796.8M655.5 744.9V787.1M656.5 751.3V787M657.5 753.2V788.4M658.5 756V787.9M659.5 753.9V786.7M660.5 750.2V788M661.5 746.3V787.1M662.5 747.4V792.7M663.5 748.5V793.7M664.5 750.2V790M665.5 755.8V788.4M666.5 753.1V791M667.5 754.5V785.1M668.5 756.8V781.9M669.5 758.4V784.3M670.5 759.9V783.1M671.5 757.1V785.9M672.5 754.8V785.5M673.5 752.6V786M674.5 751.8V789.9M675.5 752.7V791.1M676.5 757.5V789.4M677.5 755.8V787.9M678.5 757.7V783.9M679.5 758V781.6M680.5 754.2V783.3M681.5 752.7V782M682.5 753.6V782.3M683.5 757.9V781.9M684.5 760V780.6M685.5 759.8V780.2M686.5 759.2V781M687.5 757.3V781.7M688.5 755.1V780.5M689.5 753.4V782.8M690.5 751.8V783M691.5 752.9V783.8M692.5 754.3V781M693.5 757.5V781.2M694.5 758.7V782.9M695.5 758.7V780.5M696.5 758.8V778.5M697.5 758.6V778.5M698.5 758V778.4M699.5 756.7V778.9M700.5 755.6V778.4M701.5 754.6V779.7M702.5 755.3V780.1M703.5 759V779.2M704.5 759.7V777.2M705.5 757.5V777.4M706.5 756.5V776.3M707.5 755.4V775.6M708.5 758.4V775.7M709.5 758V776M710.5 760.1V775.1M711.5 761.4V775.9M712.5 761.7V776.5M713.5 760.9V775.3M714.5 760.2V776.7M715.5 759.4V777.5M716.5 759.1V778.3M717.5 759.1V777.9M718.5 758.9V776.1M719.5 758.5V779M720.5 761.4V776.7M721.5 759.4V777.7M722.5 761.5V776.5M723.5 762.6V774.7M724.5 763.3V774.8M725.5 761.9V775.2M726.5 761.5V775.6M727.5 763.4V775.5M728.5 762.1V776.3M729.5 762.1V775.3M730.5 761.1V777.4M731.5 761.2V776.9M732.5 762.6V776.1M733.5 761.7V774.9M734.5 763V775.4M735.5 763.1V775.4M736.5 763V775.6M737.5 763.1V775.6M738.5 763.3V775.2M739.5 763.6V775.5M740.5 764V775.5M741.5 763V775.4M742.5 763.3V774.9M743.5 762.6V774.6" stroke="url(#wg)" stroke-width="1.05" fill="none"/><text x="349.6" y="500" font-size="10" fill="#d0d0d0">L</text><text x="349.3" y="686" font-size="10" fill="#d0d0d0">R</text></svg>
<div class="abs row" style="top:499px;height:37.2px"></div>
<div class="abs row" style="top:544.8px;height:36.8px"></div>
<div class="abs row" style="top:590px;height:37px"></div>
<div class="abs row" style="top:635.1px;height:36.8px"></div>
<div class="abs row" style="top:680.8px;height:126.5px"></div>
<div class="abs row" style="top:817px;height:35.7px"></div>
<div class="abs lab" style="top:506.4px;color:#dcdcdc">TP</div>
<div class="abs val" style="top:506.4px;color:#dcdcdc">-9.35</div>
<div class="abs unit" style="top:522.2px;color:#d0d0d0">dB</div>
<div class="abs lab" style="top:552.2px;color:#12c812">I</div>
<div class="abs val" style="top:552.2px;color:#dcdcdc">-23.1</div>
<div class="abs unit" style="top:568px;color:#12c812">LUFS</div>
<div class="abs lab" style="top:597.4px;color:#f0c400">S</div>
<div class="abs val" style="top:597.4px;color:#dcdcdc">-22.2</div>
<div class="abs unit" style="top:613.2px;color:#f0c400">LUFS</div>
<div class="abs lab" style="top:642.6px;color:#08a8f0">M Max.</div>
<div class="abs val" style="top:642.6px;color:#dcdcdc">-19.1</div>
<div class="abs unit" style="top:658.4px;color:#08a8f0">LUFS</div>
<div class="abs lab" style="top:688.2px;color:#e2e2e2">R</div>
<div class="abs val" style="top:688.2px;color:#8e8e8e">+2.8</div>
<div class="abs unit" style="top:704px;color:#e2e2e2">LU *</div>
<div class="abs lab" style="top:733.2px;color:#8e8e8e">Min.</div>
<div class="abs val" style="top:733.2px;color:#8e8e8e">+0.1</div>
<div class="abs unit" style="top:749px;color:#8e8e8e">LU *</div>
<div class="abs lab" style="top:778.7px;color:#8e8e8e">Max.</div>
<div class="abs val" style="top:778.7px;color:#8e8e8e">+2.8</div>
<div class="abs unit" style="top:794.5px;color:#8e8e8e">LU *</div>
<div class="abs lab" style="top:823.1px;color:#e2e2e2">Time</div>
<svg width="1200" height="920" viewBox="0 0 1200 920"><defs><clipPath id="lc"><rect x="750" y="491" width="427.4" height="370"/></clipPath></defs><g clip-path="url(#lc)"><text x="834.2" y="841.9" font-size="23" font-weight="bold" fill="#dcdcdc" textLength="92.5" lengthAdjust="spacingAndGlyphs">0:00:07</text><defs><linearGradient id="gm" x1="0" y1="0" x2="0" y2="1"><stop offset="0" stop-color="#00b6fa"/><stop offset="1" stop-color="#0684b6"/></linearGradient><linearGradient id="gs" x1="0" y1="0" x2="0" y2="1"><stop offset="0" stop-color="#facc08"/><stop offset="1" stop-color="#b48c04"/></linearGradient><linearGradient id="gi" x1="0" y1="0" x2="0" y2="1"><stop offset="0" stop-color="#00ea08"/><stop offset="1" stop-color="#009c08"/></linearGradient></defs><rect x="985.4" y="491" width="117.8" height="369.5" fill="#232323"/><path d="M985.4 532.3 H1103.2" stroke="#2b2b2b" stroke-width="1"/><path d="M985.4 573.4 H1103.2" stroke="#2b2b2b" stroke-width="1"/><path d="M985.4 614.6 H1103.2" stroke="#2b2b2b" stroke-width="1"/><path d="M985.4 655.8 H1103.2" stroke="#2b2b2b" stroke-width="1"/><path d="M985.4 696.9 H1103.2" stroke="#2b2b2b" stroke-width="1"/><path d="M985.4 738 H1103.2" stroke="#2b2b2b" stroke-width="1"/><path d="M985.4 779.2 H1103.2" stroke="#2b2b2b" stroke-width="1"/><path d="M985.4 820.3 H1103.2" stroke="#2b2b2b" stroke-width="1"/><rect x="986" y="728.7" width="52" height="131.3" fill="url(#gm)"/><rect x="1039.7" y="604.3" width="30.3" height="255.7" fill="url(#gs)"/><rect x="1072" y="616.5" width="30.3" height="243.5" fill="url(#gi)"/><path d="M986 655.8 H1102.3" stroke="#000" stroke-opacity="0.07" stroke-width="1"/><path d="M986 696.9 H1102.3" stroke="#000" stroke-opacity="0.07" stroke-width="1"/><path d="M986 738 H1102.3" stroke="#000" stroke-opacity="0.07" stroke-width="1"/><path d="M986 779.2 H1102.3" stroke="#000" stroke-opacity="0.07" stroke-width="1"/><path d="M986 820.3 H1102.3" stroke="#000" stroke-opacity="0.07" stroke-width="1"/><path d="M986.4 561 H1037.6" stroke="#0a9ee0" stroke-width="2"/><path d="M1040 596.4 H1070" stroke="#c8a010" stroke-width="2"/><path d="M1072 588.2 H1102" stroke="#12b012" stroke-width="2"/><text x="977.6" y="535.7" font-size="10" fill="#bcbcbc" text-anchor="end">-17</text><path d="M979.8 532.3 H984.2 M1104.2 532.3 H1108.8" stroke="#9a9a9a" stroke-width="1"/><text x="1110" y="535.7" font-size="10" fill="#bcbcbc">-17</text><text x="977.6" y="576.8" font-size="10" fill="#bcbcbc" text-anchor="end">-20</text><path d="M979.8 573.4 H984.2 M1104.2 573.4 H1108.8" stroke="#9a9a9a" stroke-width="1"/><text x="1110" y="576.8" font-size="10" fill="#bcbcbc">-20</text><text x="977.6" y="618" font-size="10" fill="#44c4aa" text-anchor="end">-23</text><path d="M979.8 614.6 H984.2 M1104.2 614.6 H1108.8" stroke="#44c4aa" stroke-width="1"/><text x="1110" y="618" font-size="10" fill="#44c4aa">-23</text><text x="977.6" y="659.1" font-size="10" fill="#bcbcbc" text-anchor="end">-26</text><path d="M979.8 655.8 H984.2 M1104.2 655.8 H1108.8" stroke="#9a9a9a" stroke-width="1"/><text x="1110" y="659.1" font-size="10" fill="#bcbcbc">-26</text><text x="977.6" y="700.3" font-size="10" fill="#bcbcbc" text-anchor="end">-29</text><path d="M979.8 696.9 H984.2 M1104.2 696.9 H1108.8" stroke="#9a9a9a" stroke-width="1"/><text x="1110" y="700.3" font-size="10" fill="#bcbcbc">-29</text><text x="977.6" y="741.4" font-size="10" fill="#bcbcbc" text-anchor="end">-32</text><path d="M979.8 738 H984.2 M1104.2 738 H1108.8" stroke="#9a9a9a" stroke-width="1"/><text x="1110" y="741.4" font-size="10" fill="#bcbcbc">-32</text><text x="977.6" y="782.6" font-size="10" fill="#bcbcbc" text-anchor="end">-35</text><path d="M979.8 779.2 H984.2 M1104.2 779.2 H1108.8" stroke="#9a9a9a" stroke-width="1"/><text x="1110" y="782.6" font-size="10" fill="#bcbcbc">-35</text><text x="977.6" y="823.7" font-size="10" fill="#bcbcbc" text-anchor="end">-38</text><path d="M979.8 820.3 H984.2 M1104.2 820.3 H1108.8" stroke="#9a9a9a" stroke-width="1"/><text x="1110" y="823.7" font-size="10" fill="#bcbcbc">-38</text><text x="977.6" y="501" font-size="10" fill="#bcbcbc" text-anchor="end">-14</text><text x="1110" y="501" font-size="10" fill="#bcbcbc">-14</text><text x="1110" y="859.3" font-size="10" fill="#bcbcbc">-41</text><path d="M979.8 491.5 H984.2 M1104.2 491.5 H1108.8 M1158.4 491.5 H1162.5 M979.8 861 H984.2 M1104.2 861 H1108.8 M1158.4 861 H1162.5" stroke="#8a8a8a" stroke-width="1"/><path d="M979.8 614.8 H1108.8" stroke="#44c4aa" stroke-width="1.1"/><text x="1012" y="855.2" font-size="9" font-weight="bold" fill="#5cc8f2" text-anchor="middle">M</text><text x="1054.8" y="855.2" font-size="9" font-weight="bold" fill="#dcc054" text-anchor="middle">S</text><text x="1087.2" y="855.2" font-size="9" font-weight="bold" fill="#54d054" text-anchor="middle">I</text><rect x="1135.7" y="491" width="20.6" height="369.5" fill="#262626"/><rect x="1136.7" y="650.1" width="19" height="51.7" fill="#8c8c8c"/><rect x="1136.7" y="677" width="19" height="24.8" fill="#969696"/><rect x="1136.7" y="675.2" width="19" height="2" fill="#e4e4e4"/><path d="M1135.7 565.3 H1162.5 M1135.7 787.1 H1162.5" stroke="#3cae98" stroke-width="1.2"/><path d="M1158.4 528.3 H1162.5" stroke="#9a9a9a" stroke-width="1"/><text x="1164.3" y="531.7" font-size="10" fill="#bcbcbc">+8</text><path d="M1158.4 602.6 H1162.5" stroke="#9a9a9a" stroke-width="1"/><text x="1164.3" y="606" font-size="10" fill="#bcbcbc">+4</text><path d="M1158.4 639.6 H1162.5" stroke="#9a9a9a" stroke-width="1"/><text x="1164.3" y="643" font-size="10" fill="#bcbcbc">+2</text><path d="M1158.4 676.6 H1162.5" stroke="#9a9a9a" stroke-width="1"/><text x="1164.3" y="680" font-size="10" fill="#bcbcbc">+0</text><path d="M1158.4 713.6 H1162.5" stroke="#9a9a9a" stroke-width="1"/><text x="1164.3" y="717" font-size="10" fill="#bcbcbc">-2</text><path d="M1158.4 750.6 H1162.5" stroke="#9a9a9a" stroke-width="1"/><text x="1164.3" y="754" font-size="10" fill="#bcbcbc">-4</text><path d="M1158.4 824.4 H1162.5" stroke="#9a9a9a" stroke-width="1"/><text x="1164.3" y="827.8" font-size="10" fill="#bcbcbc">-8</text><text x="1164.3" y="501" font-size="10" fill="#bcbcbc">+10</text><text x="1164.3" y="859.3" font-size="10" fill="#bcbcbc">-10</text><text x="1145.6" y="855.2" font-size="9" font-weight="bold" fill="#6c6c6c" text-anchor="middle">R</text></g></svg>
<svg width="1200" height="920" viewBox="0 0 1200 920"><circle cx="27.6" cy="895.5" r="10.9" fill="none" stroke="#f6f6f6" stroke-width="2.9"/><path d="M28.7 891.7 L35.8 895.6 L28.7 899.5 Z" fill="#f6f6f6"/><text x="45" y="901.8" font-size="17.5" font-weight="bold" fill="#f6f6f6" textLength="78.5" lengthAdjust="spacingAndGlyphs">steinberg</text><text x="1100" y="900" font-size="17" font-weight="bold" fill="#f6f6f6" textLength="44.5" lengthAdjust="spacingAndGlyphs">super</text><text x="1144.5" y="900" font-size="17" fill="#e4e4e4" textLength="41.5" lengthAdjust="spacingAndGlyphs">vision</text></svg>
</body></html>
